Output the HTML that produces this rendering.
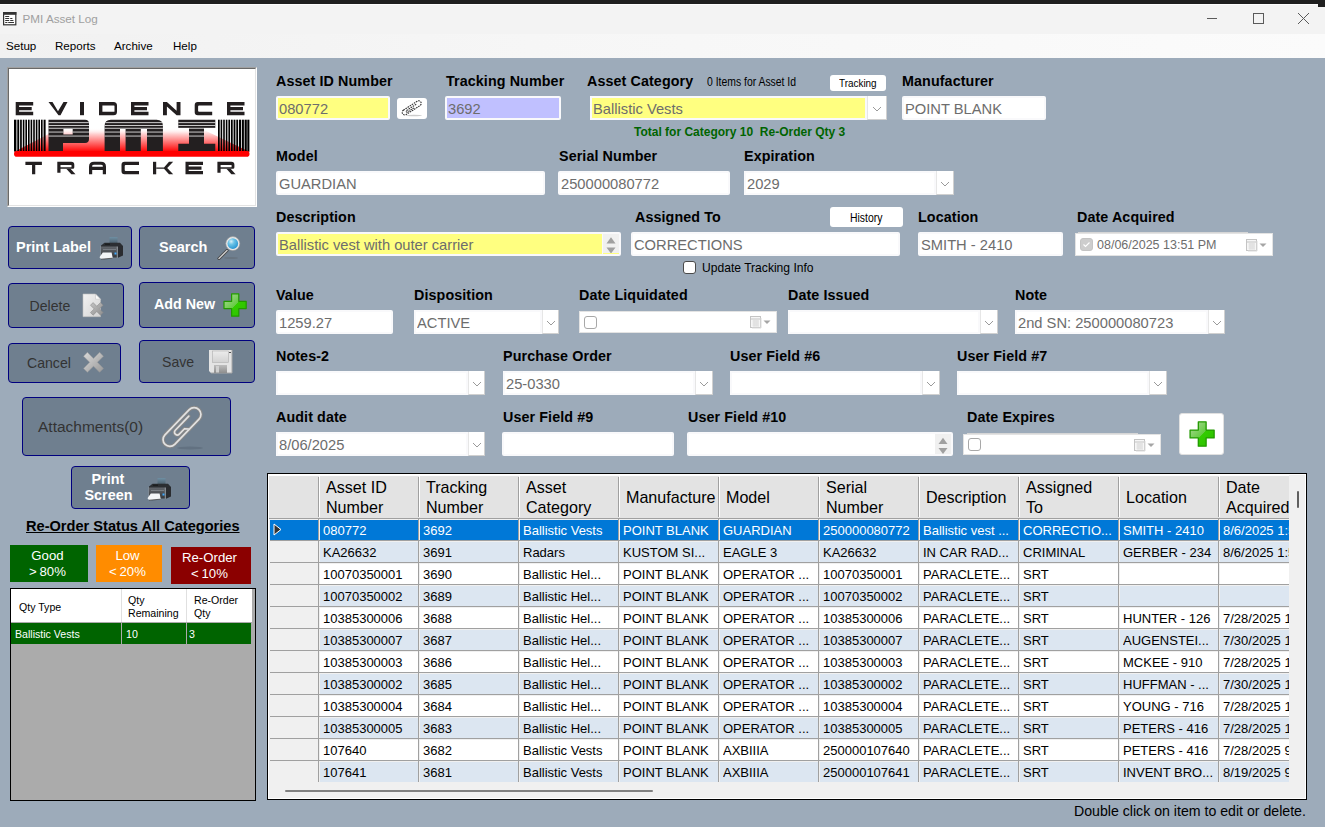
<!DOCTYPE html><html><head><meta charset="utf-8"><style>
html,body{margin:0;padding:0;}
body{width:1325px;height:827px;overflow:hidden;position:relative;background:#9DABBA;font-family:"Liberation Sans", sans-serif;}
.t{position:absolute;white-space:nowrap;}
.b{position:absolute;}
</style></head><body>
<div class="b" style="left:0px;top:0px;width:1325px;height:4px;background:#1F1F1F;"></div>
<div class="b" style="left:0px;top:4px;width:1325px;height:30px;background:#F3F3F3;"></div>
<div class="b" style="left:0px;top:4px;width:1320px;height:1px;background:#FDFDFD;"></div>
<div class="b" style="left:1318px;top:4px;width:7px;height:3px;background:#1F1F1F;border-bottom-left-radius:0;"></div>
<div class="b" style="left:0px;top:34px;width:1325px;height:24px;background:linear-gradient(to right,#F1F1F1,#F6F6F6 40%,#FBFBFB);"></div>
<svg class="b" style="left:3px;top:12px" width="14" height="14" viewBox="0 0 14 14"><rect x="0.6" y="0.6" width="12.2" height="12.2" fill="#fff" stroke="#333" stroke-width="1.2"/><rect x="0" y="0" width="13.4" height="2.8" fill="#333"/><path d="M2.6 4.5h3.2M2.6 6.5h3.2M7.6 6.5h1.4M2.6 8.5h3.2M7.6 8.5h2.4M2.6 10.5h1.4M5.6 10.5h5" stroke="#333" stroke-width="1" stroke-linecap="round"/></svg>
<div class="t" style="left:22.5px;top:13.10px;font-size:11.7px;line-height:11.7px;color:#A0A0A0;">PMI Asset Log</div>
<svg class="b" style="left:1205px;top:12px" width="110" height="14" viewBox="0 0 110 14"><path d="M2 6.5h10" stroke="#5a5a5a" stroke-width="1"/><rect x="48.5" y="1.5" width="10" height="10" fill="none" stroke="#5a5a5a" stroke-width="1"/><path d="M93 1l11 11M104 1l-11 11" stroke="#5a5a5a" stroke-width="1"/></svg>
<div class="t" style="left:6px;top:40.18px;font-size:11.6px;line-height:11.6px;color:#000;">Setup</div>
<div class="t" style="left:55px;top:40.18px;font-size:11.6px;line-height:11.6px;color:#000;">Reports</div>
<div class="t" style="left:114px;top:40.18px;font-size:11.6px;line-height:11.6px;color:#000;">Archive</div>
<div class="t" style="left:173px;top:40.18px;font-size:11.6px;line-height:11.6px;color:#000;">Help</div>
<div class="b" style="left:7px;top:67px;width:250px;height:140px;background:#fff;border-top:1px solid #A0A0A0;border-left:1px solid #A0A0A0;border-right:1px solid #fff;border-bottom:1px solid #fff;box-sizing:border-box;"></div>
<div class="b" style="left:8px;top:68px;width:248px;height:138px;background:#fff;border-top:1px solid #696969;border-left:1px solid #696969;border-right:1px solid #E3E3E3;border-bottom:1px solid #E3E3E3;box-sizing:border-box;"></div>
<svg class="b" style="left:9px;top:69px" width="247" height="137" viewBox="9 69 247 137"><path d="M15.7 102h17.5v3.4h-14.1v1.5000000000000018h12.6v3.4h-12.6v1.5000000000000018h14.1v3.4h-17.5z" fill="#231F20"/><path d="M48.5 102h4.0l5.5 9.300000000000002l5.5 -9.300000000000002h4.0l-7.0 13.200000000000003h-2z" fill="#231F20"/><rect x="80" y="102" width="4" height="13.200000000000003" fill="#231F20"/><path d="M99 102h14.5q3.5 0 3.5 3.5v6.200000000000003q0 3.5 -3.5 3.5h-14.5z M102.4 105.4v6.400000000000003h11.6q0.5 0 0.5 -0.5v-5.400000000000003q0 -0.5 -0.5 -0.5z" fill="#231F20" fill-rule="evenodd"/><path d="M131 102h17.5v3.4h-14.1v1.5000000000000018h12.6v3.4h-12.6v1.5000000000000018h14.1v3.4h-17.5z" fill="#231F20"/><path d="M163 102h3.9l9.7 8.800000000000002v-8.800000000000002h3.9v13.200000000000003h-3.9l-9.7 -8.800000000000002v8.800000000000002h-3.9z" fill="#231F20"/><path d="M212.2 102h-14.5q-3 0 -3 3v7.200000000000003q0 3 3 3h14.5v-3.4h-13.1q-1 0 -1 -1v-4.400000000000003q0 -1 1 -1h13.1z" fill="#231F20"/><path d="M227 102h17.5v3.4h-14.1v1.5000000000000018h12.6v3.4h-12.6v1.5000000000000018h14.1v3.4h-17.5z" fill="#231F20"/><path d="M25.4 161.8h16.5v3.2h-6.65v9.3h-3.2v-9.3h-6.65z" fill="#231F20"/><path d="M57.3 161.8h14q3 0 3 3v2.375000000000001q0 1.5 -1.5 1.5h-12.3v4.124999999999999h-3.2z M60.5 165.0v2.1750000000000007h10.8q0.2 0 0.2 -0.2v-1.6750000000000007q0 -0.3 -0.3 -0.3z" fill="#231F20" fill-rule="evenodd"/><path d="M66.3 168.675h4.2l5 5.625h-4.2z" fill="#231F20"/><path d="M89 174.3v-7.5q0-5 5-5h7q5 0 5 5v7.5h-3.2v-4.375h-10.6v4.375z M92.2 166.72500000000002h10.6v-0.9249999999999998q0 -1 -2 -1h-6.6q-2 0 -2 1z" fill="#231F20" fill-rule="evenodd"/><path d="M139.0 161.8h-14.5q-3 0 -3 3v6.5q0 3 3 3h14.5v-3.2h-13.3q-1 0 -1 -1v-4.1q0 -1 1 -1h13.3z" fill="#231F20"/><rect x="153" y="161.8" width="3.2" height="12.5" fill="#231F20"/><path d="M156.2 167.425h7.800000000000001l5 -5.625h4.2l-6 6.25l6 6.25h-4.2l-5 -5.625h-7.800000000000001z" fill="#231F20"/><path d="M185.5 161.8h17.5v3.2h-14.3v1.4499999999999993h12.8v3.2h-12.8v1.4499999999999993h14.3v3.2h-17.5z" fill="#231F20"/><path d="M217.4 161.8h14q3 0 3 3v2.375000000000001q0 1.5 -1.5 1.5h-12.3v4.124999999999999h-3.2z M220.6 165.0v2.1750000000000007h10.8q0.2 0 0.2 -0.2v-1.6750000000000007q0 -0.3 -0.3 -0.3z" fill="#231F20" fill-rule="evenodd"/><path d="M226.4 168.675h4.2l5 5.625h-4.2z" fill="#231F20"/><defs><linearGradient id="rg" x1="0" y1="0" x2="0" y2="1"><stop offset="0" stop-color="#fff" stop-opacity="0"/><stop offset="0.25" stop-color="#ffd0d0"/><stop offset="1" stop-color="#ff0000"/></linearGradient></defs><path d="M14 152L60 128H200L250 152Z" fill="url(#rg)"/><rect x="14" y="119.7" width="2.4" height="31.8" fill="#000"/><rect x="17.3" y="119.7" width="1.9" height="31.8" fill="#000"/><rect x="20.1" y="119.7" width="1.7" height="31.8" fill="#000"/><rect x="22.8" y="119.7" width="1.6" height="31.8" fill="#000"/><rect x="25.4" y="119.7" width="1.6" height="31.8" fill="#000"/><rect x="28" y="119.7" width="1.6" height="31.8" fill="#000"/><rect x="30.6" y="119.7" width="1.6" height="31.8" fill="#000"/><rect x="33.2" y="119.7" width="1.6" height="31.8" fill="#000"/><rect x="35.8" y="119.7" width="1.6" height="31.8" fill="#000"/><rect x="38.4" y="119.7" width="1.6" height="31.8" fill="#000"/><rect x="41" y="119.7" width="1.6" height="31.8" fill="#000"/><rect x="43.6" y="119.7" width="2" height="31.8" fill="#000"/><rect x="218" y="119.7" width="1.7" height="31.8" fill="#000"/><rect x="220.6" y="119.7" width="1.6" height="31.8" fill="#000"/><rect x="223.2" y="119.7" width="1.6" height="31.8" fill="#000"/><rect x="225.8" y="119.7" width="1.6" height="31.8" fill="#000"/><rect x="228.4" y="119.7" width="1.7" height="31.8" fill="#000"/><rect x="231" y="119.7" width="1.7" height="31.8" fill="#000"/><rect x="233.6" y="119.7" width="1.8" height="31.8" fill="#000"/><rect x="236.3" y="119.7" width="1.8" height="31.8" fill="#000"/><rect x="239" y="119.7" width="2" height="31.8" fill="#000"/><rect x="241.8" y="119.7" width="2.1" height="31.8" fill="#000"/><rect x="244.6" y="119.7" width="2.2" height="31.8" fill="#000"/><rect x="247.3" y="119.7" width="2.1" height="31.8" fill="#000"/><defs><clipPath id="pmic"><path d="M48.5 119.7H85q4 0 4 4V139q0 4 -4 4H63v8.5H48.5Z M63.4 128.4V134.6H72.7V128.4Z" fill-rule="evenodd"/><path d="M104.6 151.5V126q0-6.3 6.3-6.3H156.6q6.3 0 6.3 6.3V151.5H147V129H140.8V151.5H125.6V129H120V151.5Z"/><path d="M178.3 119.7H215.3V127.9H204V143.8H215.3V151.5H178.3V143.8H189V127.9H178.3Z"/></clipPath></defs><path d="M48.5 119.7H85q4 0 4 4V139q0 4 -4 4H63v8.5H48.5Z M63.4 128.4V134.6H72.7V128.4Z" fill="#231F20" fill-rule="evenodd"/><path d="M104.6 151.5V126q0-6.3 6.3-6.3H156.6q6.3 0 6.3 6.3V151.5H147V129H140.8V151.5H125.6V129H120V151.5Z" fill="#231F20"/><path d="M178.3 119.7H215.3V127.9H204V143.8H215.3V151.5H178.3V143.8H189V127.9H178.3Z" fill="#231F20"/><g clip-path="url(#pmic)"><rect x="47" y="122.2" width="170" height="0.9" fill="#fff" opacity="0.85"/><rect x="47" y="125.0" width="170" height="0.9" fill="#fff" opacity="0.85"/><rect x="47" y="127.8" width="170" height="0.9" fill="#fff" opacity="0.85"/><rect x="47" y="131.6" width="170" height="0.9" fill="#fff" opacity="0.85"/><rect x="47" y="135.6" width="170" height="0.9" fill="#fff" opacity="0.85"/></g><rect x="14" y="151" width="235.5" height="5.7" rx="2.8" fill="#FF0000"/></svg>
<div class="t" style="left:276px;top:73.90px;font-size:14.3px;line-height:14.3px;font-weight:bold;color:#000;letter-spacing:0.1px;">Asset ID Number</div>
<div class="b" style="left:276px;top:96px;width:114px;height:24px;background:#FFFF80;border:2px solid #F9F9FB;box-sizing:border-box;border-radius:2px;"></div>
<div class="t" style="left:279px;top:101.30px;font-size:15px;line-height:15px;color:#6D6D6D;transform:scaleX(0.98);transform-origin:0 0;">080772</div>
<div class="b" style="left:397px;top:98px;width:30px;height:21px;background:#fff;border-radius:3px;"></div>
<svg class="b" style="left:399px;top:99px" width="26" height="19" viewBox="0 0 26 19"><ellipse cx="15" cy="16.5" rx="8" ry="0.8" fill="#ccc"/><g transform="translate(12.5 9) rotate(-33)"><path d="M-8 -2.6H8.5A2.6 2.6 0 0 1 8.5 2.6H-8A2.6 2.6 0 0 1 -8 -2.6Z M6 -0.6H-5.5A0.9 0.9 0 0 0 -5.5 1.2H3" fill="none" stroke="#333" stroke-width="1.1" stroke-dasharray="1.6 0.9"/></g></svg>
<div class="t" style="left:446px;top:73.90px;font-size:14.3px;line-height:14.3px;font-weight:bold;color:#000;letter-spacing:0.1px;">Tracking Number</div>
<div class="b" style="left:445px;top:96px;width:116px;height:24px;background:#C0C0FF;border:2px solid #F9F9FB;box-sizing:border-box;border-radius:2px;"></div>
<div class="t" style="left:448px;top:101.30px;font-size:15px;line-height:15px;color:#6D6D6D;transform:scaleX(0.98);transform-origin:0 0;">3692</div>
<div class="t" style="left:587px;top:73.90px;font-size:14.3px;line-height:14.3px;font-weight:bold;color:#000;letter-spacing:0.1px;">Asset Category</div>
<div class="t" style="left:707px;top:75.84px;font-size:12px;line-height:12px;color:#000;transform:scaleX(0.867);transform-origin:0 0;">0 Items for Asset Id</div>
<div class="b" style="left:830px;top:75px;width:56px;height:16px;background:#fff;border-radius:3px;"></div>
<div class="t" style="left:838.5px;top:77.51px;font-size:11.8px;line-height:11.8px;color:#000;transform:scaleX(0.84);transform-origin:0 0;">Tracking</div>
<div class="b" style="left:590px;top:96px;width:277px;height:24px;background:#FFFF80;border:2px solid #F9F9FB;box-sizing:border-box;"></div>
<div class="b" style="left:867px;top:96px;width:20px;height:24px;background:#fff;border-left:1px solid #e6e6e6;border-right:1px solid #d0d0d0;border-bottom:1px solid #d0d0d0;box-sizing:border-box;"></div>
<svg class="b" style="left:872.0px;top:106.0px" width="10" height="6.0"><polyline points="1,1 5.0,5.0 9,1" fill="none" stroke="#9a9a9a" stroke-width="1"/></svg>
<div class="t" style="left:593px;top:101.30px;font-size:15px;line-height:15px;color:#6D6D6D;transform:scaleX(0.98);transform-origin:0 0;">Ballistic Vests</div>
<div class="t" style="left:634px;top:125.84px;font-size:12px;line-height:12px;font-weight:bold;color:#006400;white-space:pre;">Total for Category 10  Re-Order Qty 3</div>
<div class="t" style="left:902px;top:73.90px;font-size:14.3px;line-height:14.3px;font-weight:bold;color:#000;letter-spacing:0.1px;">Manufacturer</div>
<div class="b" style="left:902px;top:96px;width:144px;height:24px;background:#fff;border:2px solid #F9F9FB;box-sizing:border-box;border-radius:2px;"></div>
<div class="t" style="left:905px;top:101.30px;font-size:15px;line-height:15px;color:#6D6D6D;transform:scaleX(0.98);transform-origin:0 0;">POINT BLANK</div>
<div class="t" style="left:276px;top:148.90px;font-size:14.3px;line-height:14.3px;font-weight:bold;color:#000;letter-spacing:0.1px;">Model</div>
<div class="b" style="left:276px;top:171px;width:269px;height:24px;background:#fff;border:2px solid #F9F9FB;box-sizing:border-box;border-radius:2px;"></div>
<div class="t" style="left:279px;top:176.30px;font-size:15px;line-height:15px;color:#6D6D6D;transform:scaleX(0.98);transform-origin:0 0;">GUARDIAN</div>
<div class="t" style="left:559px;top:148.90px;font-size:14.3px;line-height:14.3px;font-weight:bold;color:#000;letter-spacing:0.1px;">Serial Number</div>
<div class="b" style="left:558px;top:171px;width:172px;height:24px;background:#fff;border:2px solid #F9F9FB;box-sizing:border-box;border-radius:2px;"></div>
<div class="t" style="left:561px;top:176.30px;font-size:15px;line-height:15px;color:#6D6D6D;transform:scaleX(0.98);transform-origin:0 0;">250000080772</div>
<div class="t" style="left:744px;top:148.90px;font-size:14.3px;line-height:14.3px;font-weight:bold;color:#000;letter-spacing:0.1px;">Expiration</div>
<div class="b" style="left:744px;top:171px;width:192px;height:24px;background:#fff;border:2px solid #F9F9FB;box-sizing:border-box;"></div>
<div class="b" style="left:936px;top:171px;width:18px;height:24px;background:#fff;border-left:1px solid #e6e6e6;border-right:1px solid #d0d0d0;border-bottom:1px solid #d0d0d0;box-sizing:border-box;"></div>
<svg class="b" style="left:940.0px;top:181.0px" width="10" height="6.0"><polyline points="1,1 5.0,5.0 9,1" fill="none" stroke="#9a9a9a" stroke-width="1"/></svg>
<div class="t" style="left:747px;top:176.30px;font-size:15px;line-height:15px;color:#6D6D6D;transform:scaleX(0.98);transform-origin:0 0;">2029</div>
<div class="t" style="left:276px;top:209.90px;font-size:14.3px;line-height:14.3px;font-weight:bold;color:#000;letter-spacing:0.1px;">Description</div>
<div class="b" style="left:276px;top:232px;width:345px;height:24px;background:#FFFF80;border:2px solid #F9F9FB;box-sizing:border-box;border-radius:2px;"></div>
<div class="t" style="left:279px;top:237.30px;font-size:15px;line-height:15px;color:#6D6D6D;transform:scaleX(0.98);transform-origin:0 0;">Ballistic vest with outer carrier</div>
<div class="b" style="left:602px;top:234px;width:1px;height:20px;background:#F9F9FB;"></div>
<div class="b" style="left:603px;top:234px;width:16px;height:19px;background:#F0F0F0;"></div>
<svg class="b" style="left:603px;top:234px" width="16" height="19"><path d="M3.5 9.5L8 3.2L12.5 9.5Z" fill="#A0A0A0"/><path d="M3.5 13.5L8 19.5L12.5 13.5Z" fill="#A0A0A0"/></svg>
<div class="t" style="left:635px;top:209.90px;font-size:14.3px;line-height:14.3px;font-weight:bold;color:#000;letter-spacing:0.1px;">Assigned To</div>
<div class="b" style="left:830px;top:207px;width:73px;height:20px;background:#fff;border-radius:3px;"></div>
<div class="t" style="left:850px;top:212.00px;font-size:12.4px;line-height:12.4px;color:#000;transform:scaleX(0.84);transform-origin:0 0;">History</div>
<div class="b" style="left:631px;top:232px;width:269px;height:24px;background:#fff;border:2px solid #F9F9FB;box-sizing:border-box;border-radius:2px;"></div>
<div class="t" style="left:634px;top:237.30px;font-size:15px;line-height:15px;color:#6D6D6D;transform:scaleX(0.98);transform-origin:0 0;">CORRECTIONS</div>
<div class="b" style="left:683px;top:261px;width:13px;height:13px;border:1px solid #4a4a4a;border-radius:3px;background:#fff;box-sizing:border-box;"></div>
<div class="t" style="left:702px;top:261.76px;font-size:12.1px;line-height:12.1px;color:#000;">Update Tracking Info</div>
<div class="t" style="left:918px;top:209.90px;font-size:14.3px;line-height:14.3px;font-weight:bold;color:#000;letter-spacing:0.1px;">Location</div>
<div class="b" style="left:918px;top:232px;width:145px;height:24px;background:#fff;border:2px solid #F9F9FB;box-sizing:border-box;border-radius:2px;"></div>
<div class="t" style="left:921px;top:237.30px;font-size:15px;line-height:15px;color:#6D6D6D;transform:scaleX(0.98);transform-origin:0 0;">SMITH - 2410</div>
<div class="t" style="left:1077px;top:209.90px;font-size:14.3px;line-height:14.3px;font-weight:bold;color:#000;letter-spacing:0.1px;">Date Acquired</div>
<div class="b" style="left:1078px;top:232px;width:170px;height:1px;background:#d6d6d6;"></div>
<div class="b" style="left:1075px;top:233px;width:198px;height:23px;background:#fff;border:1px solid #e3e3e3;box-sizing:border-box;"></div>
<div class="b" style="left:1080px;top:238.0px;width:13px;height:13px;border:1px solid #c4c4c4;background:#cdcdcd;border-radius:3px;box-sizing:border-box;"></div>
<svg class="b" style="left:1081px;top:239.0px" width="11" height="11"><polyline points="2.5,5.5 4.5,7.5 8.5,3.5" fill="none" stroke="#fff" stroke-width="1.1"/></svg>
<svg class="b" style="left:1246px;top:238.5px" width="22" height="13" viewBox="0 0 22 13"><rect x="0.5" y="0.5" width="10" height="11" fill="#f6f6f6" stroke="#c4c4c4"/><path d="M1 3h9" stroke="#c4c4c4"/><path d="M2.5 5h6M2.5 7h6M2.5 9h6M4 4v7M6 4v7M8 4v7" stroke="#d8d8d8" stroke-width="0.8"/><path d="M11 2v10h-9" fill="none" stroke="#dcdcdc"/><path d="M13.5 4.5h7l-3.5 3.5z" fill="#a5a5a5"/></svg>
<div class="t" style="left:1097px;top:238.52px;font-size:12.5px;line-height:12.5px;color:#6D6D6D;">08/06/2025 13:51 PM</div>
<div class="t" style="left:276px;top:287.90px;font-size:14.3px;line-height:14.3px;font-weight:bold;color:#000;letter-spacing:0.1px;">Value</div>
<div class="b" style="left:276px;top:310px;width:117px;height:24px;background:#fff;border:2px solid #F9F9FB;box-sizing:border-box;border-radius:2px;"></div>
<div class="t" style="left:279px;top:315.30px;font-size:15px;line-height:15px;color:#6D6D6D;transform:scaleX(0.98);transform-origin:0 0;">1259.27</div>
<div class="t" style="left:414px;top:287.90px;font-size:14.3px;line-height:14.3px;font-weight:bold;color:#000;letter-spacing:0.1px;">Disposition</div>
<div class="b" style="left:414px;top:310px;width:128px;height:24px;background:#fff;border:2px solid #F9F9FB;box-sizing:border-box;"></div>
<div class="b" style="left:542px;top:310px;width:17px;height:24px;background:#fff;border-left:1px solid #e6e6e6;border-right:1px solid #d0d0d0;border-bottom:1px solid #d0d0d0;box-sizing:border-box;"></div>
<svg class="b" style="left:545.5px;top:320.0px" width="10" height="6.0"><polyline points="1,1 5.0,5.0 9,1" fill="none" stroke="#9a9a9a" stroke-width="1"/></svg>
<div class="t" style="left:417px;top:315.30px;font-size:15px;line-height:15px;color:#6D6D6D;transform:scaleX(0.98);transform-origin:0 0;">ACTIVE</div>
<div class="t" style="left:579px;top:287.90px;font-size:14.3px;line-height:14.3px;font-weight:bold;color:#000;letter-spacing:0.1px;">Date Liquidated</div>
<div class="b" style="left:579px;top:311px;width:198px;height:22px;background:#fff;border:1px solid #e3e3e3;box-sizing:border-box;"></div>
<div class="b" style="left:584px;top:315.5px;width:13px;height:13px;border:1px solid #a8a8a8;background:#fff;border-radius:3px;box-sizing:border-box;"></div>
<svg class="b" style="left:750px;top:316.0px" width="22" height="13" viewBox="0 0 22 13"><rect x="0.5" y="0.5" width="10" height="11" fill="#f6f6f6" stroke="#c4c4c4"/><path d="M1 3h9" stroke="#c4c4c4"/><path d="M2.5 5h6M2.5 7h6M2.5 9h6M4 4v7M6 4v7M8 4v7" stroke="#d8d8d8" stroke-width="0.8"/><path d="M11 2v10h-9" fill="none" stroke="#dcdcdc"/><path d="M13.5 4.5h7l-3.5 3.5z" fill="#a5a5a5"/></svg>
<div class="t" style="left:788px;top:287.90px;font-size:14.3px;line-height:14.3px;font-weight:bold;color:#000;letter-spacing:0.1px;">Date Issued</div>
<div class="b" style="left:788px;top:310px;width:192px;height:24px;background:#fff;border:2px solid #F9F9FB;box-sizing:border-box;"></div>
<div class="b" style="left:980px;top:310px;width:18px;height:24px;background:#fff;border-left:1px solid #e6e6e6;border-right:1px solid #d0d0d0;border-bottom:1px solid #d0d0d0;box-sizing:border-box;"></div>
<svg class="b" style="left:984.0px;top:320.0px" width="10" height="6.0"><polyline points="1,1 5.0,5.0 9,1" fill="none" stroke="#9a9a9a" stroke-width="1"/></svg>
<div class="t" style="left:1015px;top:287.90px;font-size:14.3px;line-height:14.3px;font-weight:bold;color:#000;letter-spacing:0.1px;">Note</div>
<div class="b" style="left:1015px;top:310px;width:193px;height:24px;background:#fff;border:2px solid #F9F9FB;box-sizing:border-box;"></div>
<div class="b" style="left:1208px;top:310px;width:17px;height:24px;background:#fff;border-left:1px solid #e6e6e6;border-right:1px solid #d0d0d0;border-bottom:1px solid #d0d0d0;box-sizing:border-box;"></div>
<svg class="b" style="left:1211.5px;top:320.0px" width="10" height="6.0"><polyline points="1,1 5.0,5.0 9,1" fill="none" stroke="#9a9a9a" stroke-width="1"/></svg>
<div class="t" style="left:1018px;top:315.30px;font-size:15px;line-height:15px;color:#6D6D6D;transform:scaleX(0.98);transform-origin:0 0;">2nd SN: 250000080723</div>
<div class="t" style="left:276px;top:348.90px;font-size:14.3px;line-height:14.3px;font-weight:bold;color:#000;letter-spacing:0.1px;">Notes-2</div>
<div class="b" style="left:276px;top:371px;width:192px;height:24px;background:#fff;border:2px solid #F9F9FB;box-sizing:border-box;"></div>
<div class="b" style="left:468px;top:371px;width:17px;height:24px;background:#fff;border-left:1px solid #e6e6e6;border-right:1px solid #d0d0d0;border-bottom:1px solid #d0d0d0;box-sizing:border-box;"></div>
<svg class="b" style="left:471.5px;top:381.0px" width="10" height="6.0"><polyline points="1,1 5.0,5.0 9,1" fill="none" stroke="#9a9a9a" stroke-width="1"/></svg>
<div class="t" style="left:503px;top:348.90px;font-size:14.3px;line-height:14.3px;font-weight:bold;color:#000;letter-spacing:0.1px;">Purchase Order</div>
<div class="b" style="left:503px;top:371px;width:192px;height:24px;background:#fff;border:2px solid #F9F9FB;box-sizing:border-box;"></div>
<div class="b" style="left:695px;top:371px;width:18px;height:24px;background:#fff;border-left:1px solid #e6e6e6;border-right:1px solid #d0d0d0;border-bottom:1px solid #d0d0d0;box-sizing:border-box;"></div>
<svg class="b" style="left:699.0px;top:381.0px" width="10" height="6.0"><polyline points="1,1 5.0,5.0 9,1" fill="none" stroke="#9a9a9a" stroke-width="1"/></svg>
<div class="t" style="left:506px;top:376.30px;font-size:15px;line-height:15px;color:#6D6D6D;transform:scaleX(0.98);transform-origin:0 0;">25-0330</div>
<div class="t" style="left:730px;top:348.90px;font-size:14.3px;line-height:14.3px;font-weight:bold;color:#000;letter-spacing:0.1px;">User Field #6</div>
<div class="b" style="left:730px;top:371px;width:192px;height:24px;background:#fff;border:2px solid #F9F9FB;box-sizing:border-box;"></div>
<div class="b" style="left:922px;top:371px;width:18px;height:24px;background:#fff;border-left:1px solid #e6e6e6;border-right:1px solid #d0d0d0;border-bottom:1px solid #d0d0d0;box-sizing:border-box;"></div>
<svg class="b" style="left:926.0px;top:381.0px" width="10" height="6.0"><polyline points="1,1 5.0,5.0 9,1" fill="none" stroke="#9a9a9a" stroke-width="1"/></svg>
<div class="t" style="left:957px;top:348.90px;font-size:14.3px;line-height:14.3px;font-weight:bold;color:#000;letter-spacing:0.1px;">User Field #7</div>
<div class="b" style="left:957px;top:371px;width:192px;height:24px;background:#fff;border:2px solid #F9F9FB;box-sizing:border-box;"></div>
<div class="b" style="left:1149px;top:371px;width:18px;height:24px;background:#fff;border-left:1px solid #e6e6e6;border-right:1px solid #d0d0d0;border-bottom:1px solid #d0d0d0;box-sizing:border-box;"></div>
<svg class="b" style="left:1153.0px;top:381.0px" width="10" height="6.0"><polyline points="1,1 5.0,5.0 9,1" fill="none" stroke="#9a9a9a" stroke-width="1"/></svg>
<div class="t" style="left:276px;top:409.90px;font-size:14.3px;line-height:14.3px;font-weight:bold;color:#000;letter-spacing:0.1px;">Audit date</div>
<div class="b" style="left:276px;top:432px;width:192px;height:24px;background:#fff;border:2px solid #F9F9FB;box-sizing:border-box;"></div>
<div class="b" style="left:468px;top:432px;width:17px;height:24px;background:#fff;border-left:1px solid #e6e6e6;border-right:1px solid #d0d0d0;border-bottom:1px solid #d0d0d0;box-sizing:border-box;"></div>
<svg class="b" style="left:471.5px;top:442.0px" width="10" height="6.0"><polyline points="1,1 5.0,5.0 9,1" fill="none" stroke="#9a9a9a" stroke-width="1"/></svg>
<div class="t" style="left:279px;top:437.30px;font-size:15px;line-height:15px;color:#6D6D6D;transform:scaleX(0.98);transform-origin:0 0;">8/06/2025</div>
<div class="t" style="left:503px;top:409.90px;font-size:14.3px;line-height:14.3px;font-weight:bold;color:#000;letter-spacing:0.1px;">User Field #9</div>
<div class="b" style="left:502px;top:432px;width:172px;height:24px;background:#fff;border:2px solid #F9F9FB;box-sizing:border-box;border-radius:2px;"></div>
<div class="t" style="left:688px;top:409.90px;font-size:14.3px;line-height:14.3px;font-weight:bold;color:#000;letter-spacing:0.1px;">User Field #10</div>
<div class="b" style="left:687px;top:432px;width:266px;height:24px;background:#fff;border:2px solid #F9F9FB;box-sizing:border-box;border-radius:2px;"></div>
<div class="b" style="left:935px;top:434px;width:16px;height:20px;background:#F0F0F0;"></div>
<svg class="b" style="left:935px;top:434px" width="16" height="20"><path d="M3.5 10.0L8 3.7L12.5 10.0Z" fill="#A0A0A0"/><path d="M3.5 14.0L8 20.0L12.5 14.0Z" fill="#A0A0A0"/></svg>
<div class="t" style="left:967px;top:409.90px;font-size:14.3px;line-height:14.3px;font-weight:bold;color:#000;letter-spacing:0.1px;">Date Expires</div>
<div class="b" style="left:967px;top:433px;width:171px;height:1px;background:#d6d6d6;"></div>
<div class="b" style="left:963px;top:434px;width:198px;height:21px;background:#fff;border:1px solid #e3e3e3;box-sizing:border-box;"></div>
<div class="b" style="left:968px;top:438.0px;width:13px;height:13px;border:1px solid #a8a8a8;background:#fff;border-radius:3px;box-sizing:border-box;"></div>
<svg class="b" style="left:1134px;top:438.5px" width="22" height="13" viewBox="0 0 22 13"><rect x="0.5" y="0.5" width="10" height="11" fill="#f6f6f6" stroke="#c4c4c4"/><path d="M1 3h9" stroke="#c4c4c4"/><path d="M2.5 5h6M2.5 7h6M2.5 9h6M4 4v7M6 4v7M8 4v7" stroke="#d8d8d8" stroke-width="0.8"/><path d="M11 2v10h-9" fill="none" stroke="#dcdcdc"/><path d="M13.5 4.5h7l-3.5 3.5z" fill="#a5a5a5"/></svg>
<div class="b" style="left:1179px;top:413px;width:45px;height:42px;background:#fff;border-radius:3px;border:1px solid #e0e0e0;box-sizing:border-box;"></div>
<svg class="b" style="left:1189px;top:421px" width="26" height="26" viewBox="0 0 24 24"><defs><linearGradient id="pgb" x1="0" y1="0" x2="1" y2="1"><stop offset="0" stop-color="#b4d8a0"/><stop offset="0.5" stop-color="#66cc44"/><stop offset="0.52" stop-color="#33cc00"/><stop offset="1" stop-color="#2cbf00"/></linearGradient></defs><path d="M8.6 0.8h7.2v7.6h7.4v7.2h-7.4v7.6h-7.2v-7.6h-7.6v-7.2h7.6z" fill="url(#pgb)" stroke="#229a00" stroke-width="1.2" stroke-linejoin="round"/></svg>
<div class="b" style="left:8px;top:226px;width:124px;height:43px;background:#6F7F8F;border:1px solid #00007F;border-radius:4px;box-sizing:border-box;"></div>
<div class="t" style="left:16px;top:240.03px;font-size:14.5px;line-height:14.5px;font-weight:bold;color:#fff;">Print Label</div>
<svg class="b" style="left:99px;top:236px" width="26" height="24" viewBox="0 0 26 24"><defs><linearGradient id="pta" x1="0" y1="0" x2="0" y2="1"><stop offset="0" stop-color="#6f8fa3"/><stop offset="1" stop-color="#3f4d58"/></linearGradient><linearGradient id="pba" x1="0" y1="0" x2="0" y2="1"><stop offset="0" stop-color="#63676d"/><stop offset="1" stop-color="#35383c"/></linearGradient></defs><path d="M10.5 1h8v9h-8z" fill="url(#pta)"/><path d="M2 9.5l3.5-2.8h15.5l3 3.3v1h-22z" fill="#2b2e32"/><path d="M6 7.5h5v1.5h-5z" fill="#1c1e20"/><path d="M2 10.5h16.5v11h-16.5z" fill="url(#pba)"/><path d="M2 10l-0.5 0.5v11l0.5 0.3z" fill="#8d939a"/><path d="M18.5 10.5l5.5-0.5v9.5l-5.5 2.5z" fill="#2a2c30"/><path d="M18.3 10.5v11.5" stroke="#a7adb3" stroke-width="0.8"/><path d="M4 13.5h13" stroke="#7c8187" stroke-width="0.9"/><path d="M15.5 16.5h2v2h-2z" fill="#3fa9ff"/><path d="M0.5 21.2l3.3-4.8h8.8l1.2 5.8l-11.5 1z" fill="#f3f5f7"/><path d="M2 23.2l11.6-1" stroke="#222" stroke-width="0.9" opacity="0.7"/></svg>
<div class="b" style="left:139px;top:226px;width:116px;height:43px;background:#6F7F8F;border:1px solid #00007F;border-radius:4px;box-sizing:border-box;"></div>
<div class="t" style="left:159px;top:240.03px;font-size:14.5px;line-height:14.5px;font-weight:bold;color:#fff;">Search</div>
<svg class="b" style="left:217px;top:235px" width="25" height="26" viewBox="0 0 25 26"><defs><radialGradient id="mg" cx="0.35" cy="0.3" r="0.8"><stop offset="0" stop-color="#d8f0f8"/><stop offset="0.35" stop-color="#6cc3e6"/><stop offset="1" stop-color="#1e8fd0"/></radialGradient></defs><path d="M2 23.5l8-8" stroke="#3a3a3a" stroke-width="3" stroke-linecap="round"/><path d="M2 23.5l8-8" stroke="#c8c8c8" stroke-width="1.6" stroke-linecap="round"/><ellipse cx="14" cy="23" rx="7" ry="1" fill="#555" opacity="0.25"/><circle cx="15.8" cy="8.6" r="7" fill="#e8e8e8" stroke="#9a9a9a" stroke-width="0.6"/><circle cx="15.8" cy="8.6" r="5.3" fill="url(#mg)"/></svg>
<div class="b" style="left:8px;top:283px;width:116px;height:45px;background:#6F7F8F;border:1px solid #00007F;border-radius:4px;box-sizing:border-box;"></div>
<div class="t" style="left:29.5px;top:299.26px;font-size:14.1px;line-height:14.1px;color:#333;">Delete</div>
<svg class="b" style="left:82px;top:293px" width="23" height="25" viewBox="0 0 23 25"><defs><linearGradient id="dg" x1="0" y1="0" x2="1" y2="1"><stop offset="0" stop-color="#f2f2f2"/><stop offset="1" stop-color="#d4d4d4"/></linearGradient><linearGradient id="xg" x1="0" y1="0" x2="1" y2="1"><stop offset="0" stop-color="#c4c4c4"/><stop offset="1" stop-color="#8e8e8e"/></linearGradient></defs><path d="M1 1h12.5l5 5.2v17.5h-17.5z" fill="url(#dg)" stroke="#c0c0c0" stroke-width="0.6"/><path d="M13.5 1v5.2h5z" fill="#fafafa" stroke="#bdbdbd" stroke-width="0.5"/><path d="M8.5 12.2l2.6-2.6l3.7 3.7l3.7-3.7l2.6 2.6l-3.7 3.7l3.7 3.7l-2.6 2.6l-3.7-3.7l-3.7 3.7l-2.6-2.6l3.7-3.7z" fill="url(#xg)" stroke="#8a8a8a" stroke-width="0.6"/></svg>
<div class="b" style="left:139px;top:282px;width:116px;height:46px;background:#6F7F8F;border:1px solid #00007F;border-radius:4px;box-sizing:border-box;"></div>
<div class="t" style="left:154px;top:297.20px;font-size:14.3px;line-height:14.3px;font-weight:bold;color:#fff;">Add New</div>
<svg class="b" style="left:223px;top:293px" width="24" height="24" viewBox="0 0 24 24"><defs><linearGradient id="pga" x1="0" y1="0" x2="1" y2="1"><stop offset="0" stop-color="#b4d8a0"/><stop offset="0.5" stop-color="#66cc44"/><stop offset="0.52" stop-color="#33cc00"/><stop offset="1" stop-color="#2cbf00"/></linearGradient></defs><path d="M8.6 0.8h7.2v7.6h7.4v7.2h-7.4v7.6h-7.2v-7.6h-7.6v-7.2h7.6z" fill="url(#pga)" stroke="#229a00" stroke-width="1.2" stroke-linejoin="round"/></svg>
<div class="b" style="left:8px;top:343px;width:113px;height:40px;background:#6F7F8F;border:1px solid #00007F;border-radius:4px;box-sizing:border-box;"></div>
<div class="t" style="left:27px;top:356.36px;font-size:14.1px;line-height:14.1px;color:#333;">Cancel</div>
<svg class="b" style="left:83px;top:352px" width="21" height="21" viewBox="0 0 20 20"><defs><linearGradient id="cx" x1="0" y1="0" x2="1" y2="1"><stop offset="0" stop-color="#dadada"/><stop offset="1" stop-color="#999"/></linearGradient></defs><path d="M0.5 4l3.7-3.7l5.8 5.8l5.8-5.8l3.7 3.7l-5.8 5.8l5.8 5.8l-3.7 3.7l-5.8-5.8l-5.8 5.8l-3.7-3.7l5.8-5.8z" fill="url(#cx)" stroke="#9a9a9a" stroke-width="0.5"/></svg>
<div class="b" style="left:139px;top:340px;width:116px;height:43px;background:#6F7F8F;border:1px solid #00007F;border-radius:4px;box-sizing:border-box;"></div>
<div class="t" style="left:162px;top:355.06px;font-size:14.1px;line-height:14.1px;color:#333;">Save</div>
<svg class="b" style="left:209px;top:350px" width="24" height="24" viewBox="0 0 24 24"><defs><linearGradient id="fg" x1="0" y1="0" x2="0" y2="1"><stop offset="0" stop-color="#ececec"/><stop offset="1" stop-color="#d2d2d2"/></linearGradient><linearGradient id="fs" x1="0" y1="0" x2="0" y2="1"><stop offset="0" stop-color="#bdbdbd"/><stop offset="1" stop-color="#8e8e8e"/></linearGradient></defs><path d="M0 0h23v23h-21l-2-2z" fill="#e4e4e4"/><path d="M23 0v23h-21" fill="none" stroke="#a8a8a8" stroke-width="1"/><rect x="3.5" y="1" width="16" height="11.5" fill="url(#fg)" stroke="#b0b0b0" stroke-width="0.6"/><rect x="5" y="15" width="13" height="8" fill="url(#fs)"/><rect x="7" y="16" width="3" height="6.5" fill="#d0d0d0"/><rect x="20" y="2" width="2" height="1" fill="#555"/></svg>
<div class="b" style="left:22px;top:397px;width:209px;height:59px;background:#6F7F8F;border:1px solid #00007F;border-radius:4px;box-sizing:border-box;"></div>
<div class="t" style="left:38px;top:418.88px;font-size:15.5px;line-height:15.5px;color:#333;">Attachments(0)</div>
<svg class="b" style="left:156.9px;top:401.6px" width="50" height="50" viewBox="0 0 50 50"><ellipse cx="33" cy="46" rx="13" ry="1.4" fill="#4a5866" opacity="0.35"/><g transform="translate(25 25) rotate(-46)"><path d="M-17.5 -6.8 H17.5 A6.8 6.8 0 0 1 17.5 6.8 H-17.5 A6.8 6.8 0 0 1 -17.5 -6.8 Z M12.5 -2.6 H-7 A2.8 2.8 0 0 0 -7 3 H0.5 L3.5 6.8" fill="none" stroke="#888" stroke-width="3.6" stroke-linecap="round" stroke-linejoin="round"/><path d="M-17.5 -6.8 H17.5 A6.8 6.8 0 0 1 17.5 6.8 H-17.5 A6.8 6.8 0 0 1 -17.5 -6.8 Z M12.5 -2.6 H-7 A2.8 2.8 0 0 0 -7 3 H0.5 L3.5 6.8" fill="none" stroke="#e2e2e2" stroke-width="1.7" stroke-linecap="round" stroke-linejoin="round"/></g></svg>
<div class="b" style="left:71px;top:466px;width:119px;height:43px;background:#6F7F8F;border:1px solid #00007F;border-radius:4px;box-sizing:border-box;"></div>
<div class="t" style="left:91.5px;top:472.31px;font-size:14.4px;line-height:14.4px;font-weight:bold;color:#fff;">Print</div>
<div class="t" style="left:84.5px;top:488.31px;font-size:14.4px;line-height:14.4px;font-weight:bold;color:#fff;">Screen</div>
<svg class="b" style="left:147px;top:477px" width="26" height="24" viewBox="0 0 26 24"><defs><linearGradient id="ptb" x1="0" y1="0" x2="0" y2="1"><stop offset="0" stop-color="#6f8fa3"/><stop offset="1" stop-color="#3f4d58"/></linearGradient><linearGradient id="pbb" x1="0" y1="0" x2="0" y2="1"><stop offset="0" stop-color="#63676d"/><stop offset="1" stop-color="#35383c"/></linearGradient></defs><path d="M10.5 1h8v9h-8z" fill="url(#ptb)"/><path d="M2 9.5l3.5-2.8h15.5l3 3.3v1h-22z" fill="#2b2e32"/><path d="M6 7.5h5v1.5h-5z" fill="#1c1e20"/><path d="M2 10.5h16.5v11h-16.5z" fill="url(#pbb)"/><path d="M2 10l-0.5 0.5v11l0.5 0.3z" fill="#8d939a"/><path d="M18.5 10.5l5.5-0.5v9.5l-5.5 2.5z" fill="#2a2c30"/><path d="M18.3 10.5v11.5" stroke="#a7adb3" stroke-width="0.8"/><path d="M4 13.5h13" stroke="#7c8187" stroke-width="0.9"/><path d="M15.5 16.5h2v2h-2z" fill="#3fa9ff"/><path d="M0.5 21.2l3.3-4.8h8.8l1.2 5.8l-11.5 1z" fill="#f3f5f7"/><path d="M2 23.2l11.6-1" stroke="#222" stroke-width="0.9" opacity="0.7"/></svg>
<div class="t" style="left:26px;top:518.64px;font-size:14.6px;line-height:14.6px;font-weight:bold;color:#000;text-decoration:underline;">Re-Order Status All Categories</div>
<div class="b" style="left:10px;top:545px;width:78px;height:37px;background:#006400;"></div>
<div class="b" style="left:96px;top:545px;width:66px;height:37px;background:#FF8C00;"></div>
<div class="b" style="left:171px;top:547px;width:80px;height:37px;background:#8B0000;"></div>
<div class="t" style="left:8.5px;top:548px;width:78px;text-align:center;font-size:13.2px;line-height:15.5px;color:#fff;word-spacing:-1px;">Good<br>&gt; 80%</div>
<div class="t" style="left:94.5px;top:548px;width:66px;text-align:center;font-size:13.2px;line-height:15.5px;color:#fff;word-spacing:-1px;">Low<br>&lt; 20%</div>
<div class="t" style="left:169.5px;top:550px;width:80px;text-align:center;font-size:13.2px;line-height:15.5px;color:#fff;word-spacing:-1px;">Re-Order<br>&lt; 10%</div>
<div class="b" style="left:10px;top:588px;width:246px;height:213px;background:#ABABAB;border:1px solid #000;box-sizing:border-box;"></div>
<div class="b" style="left:11px;top:589px;width:241px;height:33px;background:#fff;"></div>
<div class="b" style="left:121px;top:589px;width:1px;height:33px;background:#e0e0e0;"></div>
<div class="b" style="left:186px;top:589px;width:1px;height:33px;background:#e0e0e0;"></div>
<div class="b" style="left:11px;top:623px;width:110px;height:21px;background:#006400;"></div>
<div class="b" style="left:122px;top:623px;width:64px;height:21px;background:#006400;"></div>
<div class="b" style="left:187px;top:623px;width:64px;height:21px;background:#006400;"></div>
<div class="t" style="left:19px;top:602.03px;font-size:10.6px;line-height:10.6px;color:#000;">Qty Type</div>
<div class="t" style="left:128px;top:595.03px;font-size:10.6px;line-height:10.6px;color:#000;">Qty</div>
<div class="t" style="left:128px;top:608.03px;font-size:10.6px;line-height:10.6px;color:#000;">Remaining</div>
<div class="t" style="left:194px;top:595.03px;font-size:10.6px;line-height:10.6px;color:#000;">Re-Order</div>
<div class="t" style="left:194px;top:608.03px;font-size:10.6px;line-height:10.6px;color:#000;">Qty</div>
<div class="t" style="left:15px;top:629.03px;font-size:10.6px;line-height:10.6px;color:#fff;">Ballistic Vests</div>
<div class="t" style="left:126px;top:629.03px;font-size:10.6px;line-height:10.6px;color:#fff;">10</div>
<div class="t" style="left:189px;top:629.03px;font-size:10.6px;line-height:10.6px;color:#fff;">3</div>
<div class="b" style="left:267px;top:473px;width:1040px;height:327px;background:#F0F0F0;border:1px solid #000;box-sizing:border-box;"></div>
<div class="b" style="left:268px;top:474px;width:1038px;height:325px;border:1px solid #fff;box-sizing:border-box;"></div>
<div class="b" style="left:269px;top:475px;width:1020px;height:43px;background:#E3E3E3;"></div>
<div class="b" style="left:269px;top:518px;width:1020px;height:1px;background:#A0A0A0;"></div>
<div class="b" style="left:269px;top:475px;width:1020px;height:1px;background:#FFFFFF;"></div>
<div class="b" style="left:318px;top:477px;width:1px;height:40px;background:#A0A0A0;"></div>
<div class="b" style="left:319px;top:476px;width:1px;height:41px;background:#FFFFFF;"></div>
<div class="t" style="left:326px;top:478.87px;font-size:16.1px;line-height:16.1px;color:#000;">Asset ID</div>
<div class="t" style="left:326px;top:498.87px;font-size:16.1px;line-height:16.1px;color:#000;">Number</div>
<div class="b" style="left:418px;top:477px;width:1px;height:40px;background:#A0A0A0;"></div>
<div class="b" style="left:419px;top:476px;width:1px;height:41px;background:#FFFFFF;"></div>
<div class="t" style="left:426px;top:478.87px;font-size:16.1px;line-height:16.1px;color:#000;">Tracking</div>
<div class="t" style="left:426px;top:498.87px;font-size:16.1px;line-height:16.1px;color:#000;">Number</div>
<div class="b" style="left:518px;top:477px;width:1px;height:40px;background:#A0A0A0;"></div>
<div class="b" style="left:519px;top:476px;width:1px;height:41px;background:#FFFFFF;"></div>
<div class="t" style="left:526px;top:478.87px;font-size:16.1px;line-height:16.1px;color:#000;">Asset</div>
<div class="t" style="left:526px;top:498.87px;font-size:16.1px;line-height:16.1px;color:#000;">Category</div>
<div class="b" style="left:618px;top:477px;width:1px;height:40px;background:#A0A0A0;"></div>
<div class="b" style="left:619px;top:476px;width:1px;height:41px;background:#FFFFFF;"></div>
<div class="t" style="left:626px;top:488.87px;font-size:16.1px;line-height:16.1px;color:#000;">Manufacture</div>
<div class="b" style="left:718px;top:477px;width:1px;height:40px;background:#A0A0A0;"></div>
<div class="b" style="left:719px;top:476px;width:1px;height:41px;background:#FFFFFF;"></div>
<div class="t" style="left:726px;top:488.87px;font-size:16.1px;line-height:16.1px;color:#000;">Model</div>
<div class="b" style="left:818px;top:477px;width:1px;height:40px;background:#A0A0A0;"></div>
<div class="b" style="left:819px;top:476px;width:1px;height:41px;background:#FFFFFF;"></div>
<div class="t" style="left:826px;top:478.87px;font-size:16.1px;line-height:16.1px;color:#000;">Serial</div>
<div class="t" style="left:826px;top:498.87px;font-size:16.1px;line-height:16.1px;color:#000;">Number</div>
<div class="b" style="left:918px;top:477px;width:1px;height:40px;background:#A0A0A0;"></div>
<div class="b" style="left:919px;top:476px;width:1px;height:41px;background:#FFFFFF;"></div>
<div class="t" style="left:926px;top:488.87px;font-size:16.1px;line-height:16.1px;color:#000;">Description</div>
<div class="b" style="left:1018px;top:477px;width:1px;height:40px;background:#A0A0A0;"></div>
<div class="b" style="left:1019px;top:476px;width:1px;height:41px;background:#FFFFFF;"></div>
<div class="t" style="left:1026px;top:478.87px;font-size:16.1px;line-height:16.1px;color:#000;">Assigned</div>
<div class="t" style="left:1026px;top:498.87px;font-size:16.1px;line-height:16.1px;color:#000;">To</div>
<div class="b" style="left:1118px;top:477px;width:1px;height:40px;background:#A0A0A0;"></div>
<div class="b" style="left:1119px;top:476px;width:1px;height:41px;background:#FFFFFF;"></div>
<div class="t" style="left:1126px;top:488.87px;font-size:16.1px;line-height:16.1px;color:#000;">Location</div>
<div class="b" style="left:1218px;top:477px;width:1px;height:40px;background:#A0A0A0;"></div>
<div class="b" style="left:1219px;top:476px;width:1px;height:41px;background:#FFFFFF;"></div>
<div class="t" style="left:1226px;top:478.87px;font-size:16.1px;line-height:16.1px;color:#000;">Date</div>
<div class="t" style="left:1226px;top:498.87px;font-size:16.1px;line-height:16.1px;color:#000;">Acquired</div>
<div class="b" style="left:269px;top:519px;width:1020px;height:263px;overflow:hidden;">
<div class="b" style="left:0px;top:0px;width:49px;height:22px;background:#F0F0F0;"></div>
<div class="b" style="left:1px;top:1px;width:48px;height:20px;background:#0078D7;"></div>
<svg class="b" style="left:4px;top:4px" width="10" height="13"><path d="M1 1L8 6.5L1 12Z" fill="#333" stroke="#fff" stroke-width="1"/></svg>
<div class="b" style="left:1px;top:21px;width:48px;height:1px;background:#A0A0A0;"></div>
<div class="b" style="left:49px;top:0px;width:1px;height:22px;background:#A0A0A0;"></div>
<div class="b" style="left:51px;top:1px;width:98px;height:20px;background:#0078D7;"></div>
<div class="b" style="left:149px;top:0px;width:1px;height:22px;background:#A0A0A0;"></div>
<div class="b" style="left:50px;top:21px;width:100px;height:1px;background:#A0A0A0;"></div>
<div class="t" style="left:54px;top:4.90px;width:95px;overflow:hidden;font-size:13px;line-height:13px;color:#fff;">080772</div>
<div class="b" style="left:151px;top:1px;width:98px;height:20px;background:#0078D7;"></div>
<div class="b" style="left:249px;top:0px;width:1px;height:22px;background:#A0A0A0;"></div>
<div class="b" style="left:150px;top:21px;width:100px;height:1px;background:#A0A0A0;"></div>
<div class="t" style="left:154px;top:4.90px;width:95px;overflow:hidden;font-size:13px;line-height:13px;color:#fff;">3692</div>
<div class="b" style="left:251px;top:1px;width:98px;height:20px;background:#0078D7;"></div>
<div class="b" style="left:349px;top:0px;width:1px;height:22px;background:#A0A0A0;"></div>
<div class="b" style="left:250px;top:21px;width:100px;height:1px;background:#A0A0A0;"></div>
<div class="t" style="left:254px;top:4.90px;width:95px;overflow:hidden;font-size:13px;line-height:13px;color:#fff;">Ballistic Vests</div>
<div class="b" style="left:351px;top:1px;width:98px;height:20px;background:#0078D7;"></div>
<div class="b" style="left:449px;top:0px;width:1px;height:22px;background:#A0A0A0;"></div>
<div class="b" style="left:350px;top:21px;width:100px;height:1px;background:#A0A0A0;"></div>
<div class="t" style="left:354px;top:4.90px;width:95px;overflow:hidden;font-size:13px;line-height:13px;color:#fff;">POINT BLANK</div>
<div class="b" style="left:451px;top:1px;width:98px;height:20px;background:#0078D7;"></div>
<div class="b" style="left:549px;top:0px;width:1px;height:22px;background:#A0A0A0;"></div>
<div class="b" style="left:450px;top:21px;width:100px;height:1px;background:#A0A0A0;"></div>
<div class="t" style="left:454px;top:4.90px;width:95px;overflow:hidden;font-size:13px;line-height:13px;color:#fff;">GUARDIAN</div>
<div class="b" style="left:551px;top:1px;width:98px;height:20px;background:#0078D7;"></div>
<div class="b" style="left:649px;top:0px;width:1px;height:22px;background:#A0A0A0;"></div>
<div class="b" style="left:550px;top:21px;width:100px;height:1px;background:#A0A0A0;"></div>
<div class="t" style="left:554px;top:4.90px;width:95px;overflow:hidden;font-size:13px;line-height:13px;color:#fff;">250000080772</div>
<div class="b" style="left:651px;top:1px;width:98px;height:20px;background:#0078D7;"></div>
<div class="b" style="left:749px;top:0px;width:1px;height:22px;background:#A0A0A0;"></div>
<div class="b" style="left:650px;top:21px;width:100px;height:1px;background:#A0A0A0;"></div>
<div class="t" style="left:654px;top:4.90px;width:95px;overflow:hidden;font-size:13px;line-height:13px;color:#fff;">Ballistic vest ...</div>
<div class="b" style="left:751px;top:1px;width:98px;height:20px;background:#0078D7;"></div>
<div class="b" style="left:849px;top:0px;width:1px;height:22px;background:#A0A0A0;"></div>
<div class="b" style="left:750px;top:21px;width:100px;height:1px;background:#A0A0A0;"></div>
<div class="t" style="left:754px;top:4.90px;width:95px;overflow:hidden;font-size:13px;line-height:13px;color:#fff;">CORRECTIO...</div>
<div class="b" style="left:851px;top:1px;width:98px;height:20px;background:#0078D7;"></div>
<div class="b" style="left:949px;top:0px;width:1px;height:22px;background:#A0A0A0;"></div>
<div class="b" style="left:850px;top:21px;width:100px;height:1px;background:#A0A0A0;"></div>
<div class="t" style="left:854px;top:4.90px;width:95px;overflow:hidden;font-size:13px;line-height:13px;color:#fff;">SMITH - 2410</div>
<div class="b" style="left:951px;top:1px;width:98px;height:20px;background:#0078D7;"></div>
<div class="b" style="left:1049px;top:0px;width:1px;height:22px;background:#A0A0A0;"></div>
<div class="b" style="left:950px;top:21px;width:100px;height:1px;background:#A0A0A0;"></div>
<div class="t" style="left:954px;top:4.90px;width:95px;overflow:hidden;font-size:13px;line-height:13px;color:#fff;">8/6/2025 1:51 PM</div>
<div class="b" style="left:0px;top:22px;width:49px;height:22px;background:#F0F0F0;"></div>
<div class="b" style="left:1px;top:43px;width:48px;height:1px;background:#A0A0A0;"></div>
<div class="b" style="left:49px;top:22px;width:1px;height:22px;background:#A0A0A0;"></div>
<div class="b" style="left:51px;top:23px;width:98px;height:20px;background:#DCE6F1;"></div>
<div class="b" style="left:149px;top:22px;width:1px;height:22px;background:#A0A0A0;"></div>
<div class="b" style="left:50px;top:43px;width:100px;height:1px;background:#A0A0A0;"></div>
<div class="t" style="left:54px;top:26.90px;width:95px;overflow:hidden;font-size:13px;line-height:13px;color:#000;">KA26632</div>
<div class="b" style="left:151px;top:23px;width:98px;height:20px;background:#DCE6F1;"></div>
<div class="b" style="left:249px;top:22px;width:1px;height:22px;background:#A0A0A0;"></div>
<div class="b" style="left:150px;top:43px;width:100px;height:1px;background:#A0A0A0;"></div>
<div class="t" style="left:154px;top:26.90px;width:95px;overflow:hidden;font-size:13px;line-height:13px;color:#000;">3691</div>
<div class="b" style="left:251px;top:23px;width:98px;height:20px;background:#DCE6F1;"></div>
<div class="b" style="left:349px;top:22px;width:1px;height:22px;background:#A0A0A0;"></div>
<div class="b" style="left:250px;top:43px;width:100px;height:1px;background:#A0A0A0;"></div>
<div class="t" style="left:254px;top:26.90px;width:95px;overflow:hidden;font-size:13px;line-height:13px;color:#000;">Radars</div>
<div class="b" style="left:351px;top:23px;width:98px;height:20px;background:#DCE6F1;"></div>
<div class="b" style="left:449px;top:22px;width:1px;height:22px;background:#A0A0A0;"></div>
<div class="b" style="left:350px;top:43px;width:100px;height:1px;background:#A0A0A0;"></div>
<div class="t" style="left:354px;top:26.90px;width:95px;overflow:hidden;font-size:13px;line-height:13px;color:#000;">KUSTOM SI...</div>
<div class="b" style="left:451px;top:23px;width:98px;height:20px;background:#DCE6F1;"></div>
<div class="b" style="left:549px;top:22px;width:1px;height:22px;background:#A0A0A0;"></div>
<div class="b" style="left:450px;top:43px;width:100px;height:1px;background:#A0A0A0;"></div>
<div class="t" style="left:454px;top:26.90px;width:95px;overflow:hidden;font-size:13px;line-height:13px;color:#000;">EAGLE 3</div>
<div class="b" style="left:551px;top:23px;width:98px;height:20px;background:#DCE6F1;"></div>
<div class="b" style="left:649px;top:22px;width:1px;height:22px;background:#A0A0A0;"></div>
<div class="b" style="left:550px;top:43px;width:100px;height:1px;background:#A0A0A0;"></div>
<div class="t" style="left:554px;top:26.90px;width:95px;overflow:hidden;font-size:13px;line-height:13px;color:#000;">KA26632</div>
<div class="b" style="left:651px;top:23px;width:98px;height:20px;background:#DCE6F1;"></div>
<div class="b" style="left:749px;top:22px;width:1px;height:22px;background:#A0A0A0;"></div>
<div class="b" style="left:650px;top:43px;width:100px;height:1px;background:#A0A0A0;"></div>
<div class="t" style="left:654px;top:26.90px;width:95px;overflow:hidden;font-size:13px;line-height:13px;color:#000;">IN CAR RAD...</div>
<div class="b" style="left:751px;top:23px;width:98px;height:20px;background:#DCE6F1;"></div>
<div class="b" style="left:849px;top:22px;width:1px;height:22px;background:#A0A0A0;"></div>
<div class="b" style="left:750px;top:43px;width:100px;height:1px;background:#A0A0A0;"></div>
<div class="t" style="left:754px;top:26.90px;width:95px;overflow:hidden;font-size:13px;line-height:13px;color:#000;">CRIMINAL</div>
<div class="b" style="left:851px;top:23px;width:98px;height:20px;background:#DCE6F1;"></div>
<div class="b" style="left:949px;top:22px;width:1px;height:22px;background:#A0A0A0;"></div>
<div class="b" style="left:850px;top:43px;width:100px;height:1px;background:#A0A0A0;"></div>
<div class="t" style="left:854px;top:26.90px;width:95px;overflow:hidden;font-size:13px;line-height:13px;color:#000;">GERBER - 234</div>
<div class="b" style="left:951px;top:23px;width:98px;height:20px;background:#DCE6F1;"></div>
<div class="b" style="left:1049px;top:22px;width:1px;height:22px;background:#A0A0A0;"></div>
<div class="b" style="left:950px;top:43px;width:100px;height:1px;background:#A0A0A0;"></div>
<div class="t" style="left:954px;top:26.90px;width:95px;overflow:hidden;font-size:13px;line-height:13px;color:#000;">8/6/2025 1:51 PM</div>
<div class="b" style="left:0px;top:44px;width:49px;height:22px;background:#F0F0F0;"></div>
<div class="b" style="left:1px;top:65px;width:48px;height:1px;background:#A0A0A0;"></div>
<div class="b" style="left:49px;top:44px;width:1px;height:22px;background:#A0A0A0;"></div>
<div class="b" style="left:51px;top:45px;width:98px;height:20px;background:#FFFFFF;"></div>
<div class="b" style="left:149px;top:44px;width:1px;height:22px;background:#A0A0A0;"></div>
<div class="b" style="left:50px;top:65px;width:100px;height:1px;background:#A0A0A0;"></div>
<div class="t" style="left:54px;top:48.90px;width:95px;overflow:hidden;font-size:13px;line-height:13px;color:#000;">10070350001</div>
<div class="b" style="left:151px;top:45px;width:98px;height:20px;background:#FFFFFF;"></div>
<div class="b" style="left:249px;top:44px;width:1px;height:22px;background:#A0A0A0;"></div>
<div class="b" style="left:150px;top:65px;width:100px;height:1px;background:#A0A0A0;"></div>
<div class="t" style="left:154px;top:48.90px;width:95px;overflow:hidden;font-size:13px;line-height:13px;color:#000;">3690</div>
<div class="b" style="left:251px;top:45px;width:98px;height:20px;background:#FFFFFF;"></div>
<div class="b" style="left:349px;top:44px;width:1px;height:22px;background:#A0A0A0;"></div>
<div class="b" style="left:250px;top:65px;width:100px;height:1px;background:#A0A0A0;"></div>
<div class="t" style="left:254px;top:48.90px;width:95px;overflow:hidden;font-size:13px;line-height:13px;color:#000;">Ballistic Hel...</div>
<div class="b" style="left:351px;top:45px;width:98px;height:20px;background:#FFFFFF;"></div>
<div class="b" style="left:449px;top:44px;width:1px;height:22px;background:#A0A0A0;"></div>
<div class="b" style="left:350px;top:65px;width:100px;height:1px;background:#A0A0A0;"></div>
<div class="t" style="left:354px;top:48.90px;width:95px;overflow:hidden;font-size:13px;line-height:13px;color:#000;">POINT BLANK</div>
<div class="b" style="left:451px;top:45px;width:98px;height:20px;background:#FFFFFF;"></div>
<div class="b" style="left:549px;top:44px;width:1px;height:22px;background:#A0A0A0;"></div>
<div class="b" style="left:450px;top:65px;width:100px;height:1px;background:#A0A0A0;"></div>
<div class="t" style="left:454px;top:48.90px;width:95px;overflow:hidden;font-size:13px;line-height:13px;color:#000;">OPERATOR ...</div>
<div class="b" style="left:551px;top:45px;width:98px;height:20px;background:#FFFFFF;"></div>
<div class="b" style="left:649px;top:44px;width:1px;height:22px;background:#A0A0A0;"></div>
<div class="b" style="left:550px;top:65px;width:100px;height:1px;background:#A0A0A0;"></div>
<div class="t" style="left:554px;top:48.90px;width:95px;overflow:hidden;font-size:13px;line-height:13px;color:#000;">10070350001</div>
<div class="b" style="left:651px;top:45px;width:98px;height:20px;background:#FFFFFF;"></div>
<div class="b" style="left:749px;top:44px;width:1px;height:22px;background:#A0A0A0;"></div>
<div class="b" style="left:650px;top:65px;width:100px;height:1px;background:#A0A0A0;"></div>
<div class="t" style="left:654px;top:48.90px;width:95px;overflow:hidden;font-size:13px;line-height:13px;color:#000;">PARACLETE...</div>
<div class="b" style="left:751px;top:45px;width:98px;height:20px;background:#FFFFFF;"></div>
<div class="b" style="left:849px;top:44px;width:1px;height:22px;background:#A0A0A0;"></div>
<div class="b" style="left:750px;top:65px;width:100px;height:1px;background:#A0A0A0;"></div>
<div class="t" style="left:754px;top:48.90px;width:95px;overflow:hidden;font-size:13px;line-height:13px;color:#000;">SRT</div>
<div class="b" style="left:851px;top:45px;width:98px;height:20px;background:#FFFFFF;"></div>
<div class="b" style="left:949px;top:44px;width:1px;height:22px;background:#A0A0A0;"></div>
<div class="b" style="left:850px;top:65px;width:100px;height:1px;background:#A0A0A0;"></div>
<div class="b" style="left:951px;top:45px;width:98px;height:20px;background:#FFFFFF;"></div>
<div class="b" style="left:1049px;top:44px;width:1px;height:22px;background:#A0A0A0;"></div>
<div class="b" style="left:950px;top:65px;width:100px;height:1px;background:#A0A0A0;"></div>
<div class="b" style="left:0px;top:66px;width:49px;height:22px;background:#F0F0F0;"></div>
<div class="b" style="left:1px;top:87px;width:48px;height:1px;background:#A0A0A0;"></div>
<div class="b" style="left:49px;top:66px;width:1px;height:22px;background:#A0A0A0;"></div>
<div class="b" style="left:51px;top:67px;width:98px;height:20px;background:#DCE6F1;"></div>
<div class="b" style="left:149px;top:66px;width:1px;height:22px;background:#A0A0A0;"></div>
<div class="b" style="left:50px;top:87px;width:100px;height:1px;background:#A0A0A0;"></div>
<div class="t" style="left:54px;top:70.90px;width:95px;overflow:hidden;font-size:13px;line-height:13px;color:#000;">10070350002</div>
<div class="b" style="left:151px;top:67px;width:98px;height:20px;background:#DCE6F1;"></div>
<div class="b" style="left:249px;top:66px;width:1px;height:22px;background:#A0A0A0;"></div>
<div class="b" style="left:150px;top:87px;width:100px;height:1px;background:#A0A0A0;"></div>
<div class="t" style="left:154px;top:70.90px;width:95px;overflow:hidden;font-size:13px;line-height:13px;color:#000;">3689</div>
<div class="b" style="left:251px;top:67px;width:98px;height:20px;background:#DCE6F1;"></div>
<div class="b" style="left:349px;top:66px;width:1px;height:22px;background:#A0A0A0;"></div>
<div class="b" style="left:250px;top:87px;width:100px;height:1px;background:#A0A0A0;"></div>
<div class="t" style="left:254px;top:70.90px;width:95px;overflow:hidden;font-size:13px;line-height:13px;color:#000;">Ballistic Hel...</div>
<div class="b" style="left:351px;top:67px;width:98px;height:20px;background:#DCE6F1;"></div>
<div class="b" style="left:449px;top:66px;width:1px;height:22px;background:#A0A0A0;"></div>
<div class="b" style="left:350px;top:87px;width:100px;height:1px;background:#A0A0A0;"></div>
<div class="t" style="left:354px;top:70.90px;width:95px;overflow:hidden;font-size:13px;line-height:13px;color:#000;">POINT BLANK</div>
<div class="b" style="left:451px;top:67px;width:98px;height:20px;background:#DCE6F1;"></div>
<div class="b" style="left:549px;top:66px;width:1px;height:22px;background:#A0A0A0;"></div>
<div class="b" style="left:450px;top:87px;width:100px;height:1px;background:#A0A0A0;"></div>
<div class="t" style="left:454px;top:70.90px;width:95px;overflow:hidden;font-size:13px;line-height:13px;color:#000;">OPERATOR ...</div>
<div class="b" style="left:551px;top:67px;width:98px;height:20px;background:#DCE6F1;"></div>
<div class="b" style="left:649px;top:66px;width:1px;height:22px;background:#A0A0A0;"></div>
<div class="b" style="left:550px;top:87px;width:100px;height:1px;background:#A0A0A0;"></div>
<div class="t" style="left:554px;top:70.90px;width:95px;overflow:hidden;font-size:13px;line-height:13px;color:#000;">10070350002</div>
<div class="b" style="left:651px;top:67px;width:98px;height:20px;background:#DCE6F1;"></div>
<div class="b" style="left:749px;top:66px;width:1px;height:22px;background:#A0A0A0;"></div>
<div class="b" style="left:650px;top:87px;width:100px;height:1px;background:#A0A0A0;"></div>
<div class="t" style="left:654px;top:70.90px;width:95px;overflow:hidden;font-size:13px;line-height:13px;color:#000;">PARACLETE...</div>
<div class="b" style="left:751px;top:67px;width:98px;height:20px;background:#DCE6F1;"></div>
<div class="b" style="left:849px;top:66px;width:1px;height:22px;background:#A0A0A0;"></div>
<div class="b" style="left:750px;top:87px;width:100px;height:1px;background:#A0A0A0;"></div>
<div class="t" style="left:754px;top:70.90px;width:95px;overflow:hidden;font-size:13px;line-height:13px;color:#000;">SRT</div>
<div class="b" style="left:851px;top:67px;width:98px;height:20px;background:#DCE6F1;"></div>
<div class="b" style="left:949px;top:66px;width:1px;height:22px;background:#A0A0A0;"></div>
<div class="b" style="left:850px;top:87px;width:100px;height:1px;background:#A0A0A0;"></div>
<div class="b" style="left:951px;top:67px;width:98px;height:20px;background:#DCE6F1;"></div>
<div class="b" style="left:1049px;top:66px;width:1px;height:22px;background:#A0A0A0;"></div>
<div class="b" style="left:950px;top:87px;width:100px;height:1px;background:#A0A0A0;"></div>
<div class="b" style="left:0px;top:88px;width:49px;height:22px;background:#F0F0F0;"></div>
<div class="b" style="left:1px;top:109px;width:48px;height:1px;background:#A0A0A0;"></div>
<div class="b" style="left:49px;top:88px;width:1px;height:22px;background:#A0A0A0;"></div>
<div class="b" style="left:51px;top:89px;width:98px;height:20px;background:#FFFFFF;"></div>
<div class="b" style="left:149px;top:88px;width:1px;height:22px;background:#A0A0A0;"></div>
<div class="b" style="left:50px;top:109px;width:100px;height:1px;background:#A0A0A0;"></div>
<div class="t" style="left:54px;top:92.90px;width:95px;overflow:hidden;font-size:13px;line-height:13px;color:#000;">10385300006</div>
<div class="b" style="left:151px;top:89px;width:98px;height:20px;background:#FFFFFF;"></div>
<div class="b" style="left:249px;top:88px;width:1px;height:22px;background:#A0A0A0;"></div>
<div class="b" style="left:150px;top:109px;width:100px;height:1px;background:#A0A0A0;"></div>
<div class="t" style="left:154px;top:92.90px;width:95px;overflow:hidden;font-size:13px;line-height:13px;color:#000;">3688</div>
<div class="b" style="left:251px;top:89px;width:98px;height:20px;background:#FFFFFF;"></div>
<div class="b" style="left:349px;top:88px;width:1px;height:22px;background:#A0A0A0;"></div>
<div class="b" style="left:250px;top:109px;width:100px;height:1px;background:#A0A0A0;"></div>
<div class="t" style="left:254px;top:92.90px;width:95px;overflow:hidden;font-size:13px;line-height:13px;color:#000;">Ballistic Hel...</div>
<div class="b" style="left:351px;top:89px;width:98px;height:20px;background:#FFFFFF;"></div>
<div class="b" style="left:449px;top:88px;width:1px;height:22px;background:#A0A0A0;"></div>
<div class="b" style="left:350px;top:109px;width:100px;height:1px;background:#A0A0A0;"></div>
<div class="t" style="left:354px;top:92.90px;width:95px;overflow:hidden;font-size:13px;line-height:13px;color:#000;">POINT BLANK</div>
<div class="b" style="left:451px;top:89px;width:98px;height:20px;background:#FFFFFF;"></div>
<div class="b" style="left:549px;top:88px;width:1px;height:22px;background:#A0A0A0;"></div>
<div class="b" style="left:450px;top:109px;width:100px;height:1px;background:#A0A0A0;"></div>
<div class="t" style="left:454px;top:92.90px;width:95px;overflow:hidden;font-size:13px;line-height:13px;color:#000;">OPERATOR ...</div>
<div class="b" style="left:551px;top:89px;width:98px;height:20px;background:#FFFFFF;"></div>
<div class="b" style="left:649px;top:88px;width:1px;height:22px;background:#A0A0A0;"></div>
<div class="b" style="left:550px;top:109px;width:100px;height:1px;background:#A0A0A0;"></div>
<div class="t" style="left:554px;top:92.90px;width:95px;overflow:hidden;font-size:13px;line-height:13px;color:#000;">10385300006</div>
<div class="b" style="left:651px;top:89px;width:98px;height:20px;background:#FFFFFF;"></div>
<div class="b" style="left:749px;top:88px;width:1px;height:22px;background:#A0A0A0;"></div>
<div class="b" style="left:650px;top:109px;width:100px;height:1px;background:#A0A0A0;"></div>
<div class="t" style="left:654px;top:92.90px;width:95px;overflow:hidden;font-size:13px;line-height:13px;color:#000;">PARACLETE...</div>
<div class="b" style="left:751px;top:89px;width:98px;height:20px;background:#FFFFFF;"></div>
<div class="b" style="left:849px;top:88px;width:1px;height:22px;background:#A0A0A0;"></div>
<div class="b" style="left:750px;top:109px;width:100px;height:1px;background:#A0A0A0;"></div>
<div class="t" style="left:754px;top:92.90px;width:95px;overflow:hidden;font-size:13px;line-height:13px;color:#000;">SRT</div>
<div class="b" style="left:851px;top:89px;width:98px;height:20px;background:#FFFFFF;"></div>
<div class="b" style="left:949px;top:88px;width:1px;height:22px;background:#A0A0A0;"></div>
<div class="b" style="left:850px;top:109px;width:100px;height:1px;background:#A0A0A0;"></div>
<div class="t" style="left:854px;top:92.90px;width:95px;overflow:hidden;font-size:13px;line-height:13px;color:#000;">HUNTER - 126</div>
<div class="b" style="left:951px;top:89px;width:98px;height:20px;background:#FFFFFF;"></div>
<div class="b" style="left:1049px;top:88px;width:1px;height:22px;background:#A0A0A0;"></div>
<div class="b" style="left:950px;top:109px;width:100px;height:1px;background:#A0A0A0;"></div>
<div class="t" style="left:954px;top:92.90px;width:95px;overflow:hidden;font-size:13px;line-height:13px;color:#000;">7/28/2025 1:00 PM</div>
<div class="b" style="left:0px;top:110px;width:49px;height:22px;background:#F0F0F0;"></div>
<div class="b" style="left:1px;top:131px;width:48px;height:1px;background:#A0A0A0;"></div>
<div class="b" style="left:49px;top:110px;width:1px;height:22px;background:#A0A0A0;"></div>
<div class="b" style="left:51px;top:111px;width:98px;height:20px;background:#DCE6F1;"></div>
<div class="b" style="left:149px;top:110px;width:1px;height:22px;background:#A0A0A0;"></div>
<div class="b" style="left:50px;top:131px;width:100px;height:1px;background:#A0A0A0;"></div>
<div class="t" style="left:54px;top:114.90px;width:95px;overflow:hidden;font-size:13px;line-height:13px;color:#000;">10385300007</div>
<div class="b" style="left:151px;top:111px;width:98px;height:20px;background:#DCE6F1;"></div>
<div class="b" style="left:249px;top:110px;width:1px;height:22px;background:#A0A0A0;"></div>
<div class="b" style="left:150px;top:131px;width:100px;height:1px;background:#A0A0A0;"></div>
<div class="t" style="left:154px;top:114.90px;width:95px;overflow:hidden;font-size:13px;line-height:13px;color:#000;">3687</div>
<div class="b" style="left:251px;top:111px;width:98px;height:20px;background:#DCE6F1;"></div>
<div class="b" style="left:349px;top:110px;width:1px;height:22px;background:#A0A0A0;"></div>
<div class="b" style="left:250px;top:131px;width:100px;height:1px;background:#A0A0A0;"></div>
<div class="t" style="left:254px;top:114.90px;width:95px;overflow:hidden;font-size:13px;line-height:13px;color:#000;">Ballistic Hel...</div>
<div class="b" style="left:351px;top:111px;width:98px;height:20px;background:#DCE6F1;"></div>
<div class="b" style="left:449px;top:110px;width:1px;height:22px;background:#A0A0A0;"></div>
<div class="b" style="left:350px;top:131px;width:100px;height:1px;background:#A0A0A0;"></div>
<div class="t" style="left:354px;top:114.90px;width:95px;overflow:hidden;font-size:13px;line-height:13px;color:#000;">POINT BLANK</div>
<div class="b" style="left:451px;top:111px;width:98px;height:20px;background:#DCE6F1;"></div>
<div class="b" style="left:549px;top:110px;width:1px;height:22px;background:#A0A0A0;"></div>
<div class="b" style="left:450px;top:131px;width:100px;height:1px;background:#A0A0A0;"></div>
<div class="t" style="left:454px;top:114.90px;width:95px;overflow:hidden;font-size:13px;line-height:13px;color:#000;">OPERATOR ...</div>
<div class="b" style="left:551px;top:111px;width:98px;height:20px;background:#DCE6F1;"></div>
<div class="b" style="left:649px;top:110px;width:1px;height:22px;background:#A0A0A0;"></div>
<div class="b" style="left:550px;top:131px;width:100px;height:1px;background:#A0A0A0;"></div>
<div class="t" style="left:554px;top:114.90px;width:95px;overflow:hidden;font-size:13px;line-height:13px;color:#000;">10385300007</div>
<div class="b" style="left:651px;top:111px;width:98px;height:20px;background:#DCE6F1;"></div>
<div class="b" style="left:749px;top:110px;width:1px;height:22px;background:#A0A0A0;"></div>
<div class="b" style="left:650px;top:131px;width:100px;height:1px;background:#A0A0A0;"></div>
<div class="t" style="left:654px;top:114.90px;width:95px;overflow:hidden;font-size:13px;line-height:13px;color:#000;">PARACLETE...</div>
<div class="b" style="left:751px;top:111px;width:98px;height:20px;background:#DCE6F1;"></div>
<div class="b" style="left:849px;top:110px;width:1px;height:22px;background:#A0A0A0;"></div>
<div class="b" style="left:750px;top:131px;width:100px;height:1px;background:#A0A0A0;"></div>
<div class="t" style="left:754px;top:114.90px;width:95px;overflow:hidden;font-size:13px;line-height:13px;color:#000;">SRT</div>
<div class="b" style="left:851px;top:111px;width:98px;height:20px;background:#DCE6F1;"></div>
<div class="b" style="left:949px;top:110px;width:1px;height:22px;background:#A0A0A0;"></div>
<div class="b" style="left:850px;top:131px;width:100px;height:1px;background:#A0A0A0;"></div>
<div class="t" style="left:854px;top:114.90px;width:95px;overflow:hidden;font-size:13px;line-height:13px;color:#000;">AUGENSTEI...</div>
<div class="b" style="left:951px;top:111px;width:98px;height:20px;background:#DCE6F1;"></div>
<div class="b" style="left:1049px;top:110px;width:1px;height:22px;background:#A0A0A0;"></div>
<div class="b" style="left:950px;top:131px;width:100px;height:1px;background:#A0A0A0;"></div>
<div class="t" style="left:954px;top:114.90px;width:95px;overflow:hidden;font-size:13px;line-height:13px;color:#000;">7/30/2025 1:00 PM</div>
<div class="b" style="left:0px;top:132px;width:49px;height:22px;background:#F0F0F0;"></div>
<div class="b" style="left:1px;top:153px;width:48px;height:1px;background:#A0A0A0;"></div>
<div class="b" style="left:49px;top:132px;width:1px;height:22px;background:#A0A0A0;"></div>
<div class="b" style="left:51px;top:133px;width:98px;height:20px;background:#FFFFFF;"></div>
<div class="b" style="left:149px;top:132px;width:1px;height:22px;background:#A0A0A0;"></div>
<div class="b" style="left:50px;top:153px;width:100px;height:1px;background:#A0A0A0;"></div>
<div class="t" style="left:54px;top:136.90px;width:95px;overflow:hidden;font-size:13px;line-height:13px;color:#000;">10385300003</div>
<div class="b" style="left:151px;top:133px;width:98px;height:20px;background:#FFFFFF;"></div>
<div class="b" style="left:249px;top:132px;width:1px;height:22px;background:#A0A0A0;"></div>
<div class="b" style="left:150px;top:153px;width:100px;height:1px;background:#A0A0A0;"></div>
<div class="t" style="left:154px;top:136.90px;width:95px;overflow:hidden;font-size:13px;line-height:13px;color:#000;">3686</div>
<div class="b" style="left:251px;top:133px;width:98px;height:20px;background:#FFFFFF;"></div>
<div class="b" style="left:349px;top:132px;width:1px;height:22px;background:#A0A0A0;"></div>
<div class="b" style="left:250px;top:153px;width:100px;height:1px;background:#A0A0A0;"></div>
<div class="t" style="left:254px;top:136.90px;width:95px;overflow:hidden;font-size:13px;line-height:13px;color:#000;">Ballistic Hel...</div>
<div class="b" style="left:351px;top:133px;width:98px;height:20px;background:#FFFFFF;"></div>
<div class="b" style="left:449px;top:132px;width:1px;height:22px;background:#A0A0A0;"></div>
<div class="b" style="left:350px;top:153px;width:100px;height:1px;background:#A0A0A0;"></div>
<div class="t" style="left:354px;top:136.90px;width:95px;overflow:hidden;font-size:13px;line-height:13px;color:#000;">POINT BLANK</div>
<div class="b" style="left:451px;top:133px;width:98px;height:20px;background:#FFFFFF;"></div>
<div class="b" style="left:549px;top:132px;width:1px;height:22px;background:#A0A0A0;"></div>
<div class="b" style="left:450px;top:153px;width:100px;height:1px;background:#A0A0A0;"></div>
<div class="t" style="left:454px;top:136.90px;width:95px;overflow:hidden;font-size:13px;line-height:13px;color:#000;">OPERATOR ...</div>
<div class="b" style="left:551px;top:133px;width:98px;height:20px;background:#FFFFFF;"></div>
<div class="b" style="left:649px;top:132px;width:1px;height:22px;background:#A0A0A0;"></div>
<div class="b" style="left:550px;top:153px;width:100px;height:1px;background:#A0A0A0;"></div>
<div class="t" style="left:554px;top:136.90px;width:95px;overflow:hidden;font-size:13px;line-height:13px;color:#000;">10385300003</div>
<div class="b" style="left:651px;top:133px;width:98px;height:20px;background:#FFFFFF;"></div>
<div class="b" style="left:749px;top:132px;width:1px;height:22px;background:#A0A0A0;"></div>
<div class="b" style="left:650px;top:153px;width:100px;height:1px;background:#A0A0A0;"></div>
<div class="t" style="left:654px;top:136.90px;width:95px;overflow:hidden;font-size:13px;line-height:13px;color:#000;">PARACLETE...</div>
<div class="b" style="left:751px;top:133px;width:98px;height:20px;background:#FFFFFF;"></div>
<div class="b" style="left:849px;top:132px;width:1px;height:22px;background:#A0A0A0;"></div>
<div class="b" style="left:750px;top:153px;width:100px;height:1px;background:#A0A0A0;"></div>
<div class="t" style="left:754px;top:136.90px;width:95px;overflow:hidden;font-size:13px;line-height:13px;color:#000;">SRT</div>
<div class="b" style="left:851px;top:133px;width:98px;height:20px;background:#FFFFFF;"></div>
<div class="b" style="left:949px;top:132px;width:1px;height:22px;background:#A0A0A0;"></div>
<div class="b" style="left:850px;top:153px;width:100px;height:1px;background:#A0A0A0;"></div>
<div class="t" style="left:854px;top:136.90px;width:95px;overflow:hidden;font-size:13px;line-height:13px;color:#000;">MCKEE - 910</div>
<div class="b" style="left:951px;top:133px;width:98px;height:20px;background:#FFFFFF;"></div>
<div class="b" style="left:1049px;top:132px;width:1px;height:22px;background:#A0A0A0;"></div>
<div class="b" style="left:950px;top:153px;width:100px;height:1px;background:#A0A0A0;"></div>
<div class="t" style="left:954px;top:136.90px;width:95px;overflow:hidden;font-size:13px;line-height:13px;color:#000;">7/28/2025 1:00 PM</div>
<div class="b" style="left:0px;top:154px;width:49px;height:22px;background:#F0F0F0;"></div>
<div class="b" style="left:1px;top:175px;width:48px;height:1px;background:#A0A0A0;"></div>
<div class="b" style="left:49px;top:154px;width:1px;height:22px;background:#A0A0A0;"></div>
<div class="b" style="left:51px;top:155px;width:98px;height:20px;background:#DCE6F1;"></div>
<div class="b" style="left:149px;top:154px;width:1px;height:22px;background:#A0A0A0;"></div>
<div class="b" style="left:50px;top:175px;width:100px;height:1px;background:#A0A0A0;"></div>
<div class="t" style="left:54px;top:158.90px;width:95px;overflow:hidden;font-size:13px;line-height:13px;color:#000;">10385300002</div>
<div class="b" style="left:151px;top:155px;width:98px;height:20px;background:#DCE6F1;"></div>
<div class="b" style="left:249px;top:154px;width:1px;height:22px;background:#A0A0A0;"></div>
<div class="b" style="left:150px;top:175px;width:100px;height:1px;background:#A0A0A0;"></div>
<div class="t" style="left:154px;top:158.90px;width:95px;overflow:hidden;font-size:13px;line-height:13px;color:#000;">3685</div>
<div class="b" style="left:251px;top:155px;width:98px;height:20px;background:#DCE6F1;"></div>
<div class="b" style="left:349px;top:154px;width:1px;height:22px;background:#A0A0A0;"></div>
<div class="b" style="left:250px;top:175px;width:100px;height:1px;background:#A0A0A0;"></div>
<div class="t" style="left:254px;top:158.90px;width:95px;overflow:hidden;font-size:13px;line-height:13px;color:#000;">Ballistic Hel...</div>
<div class="b" style="left:351px;top:155px;width:98px;height:20px;background:#DCE6F1;"></div>
<div class="b" style="left:449px;top:154px;width:1px;height:22px;background:#A0A0A0;"></div>
<div class="b" style="left:350px;top:175px;width:100px;height:1px;background:#A0A0A0;"></div>
<div class="t" style="left:354px;top:158.90px;width:95px;overflow:hidden;font-size:13px;line-height:13px;color:#000;">POINT BLANK</div>
<div class="b" style="left:451px;top:155px;width:98px;height:20px;background:#DCE6F1;"></div>
<div class="b" style="left:549px;top:154px;width:1px;height:22px;background:#A0A0A0;"></div>
<div class="b" style="left:450px;top:175px;width:100px;height:1px;background:#A0A0A0;"></div>
<div class="t" style="left:454px;top:158.90px;width:95px;overflow:hidden;font-size:13px;line-height:13px;color:#000;">OPERATOR ...</div>
<div class="b" style="left:551px;top:155px;width:98px;height:20px;background:#DCE6F1;"></div>
<div class="b" style="left:649px;top:154px;width:1px;height:22px;background:#A0A0A0;"></div>
<div class="b" style="left:550px;top:175px;width:100px;height:1px;background:#A0A0A0;"></div>
<div class="t" style="left:554px;top:158.90px;width:95px;overflow:hidden;font-size:13px;line-height:13px;color:#000;">10385300002</div>
<div class="b" style="left:651px;top:155px;width:98px;height:20px;background:#DCE6F1;"></div>
<div class="b" style="left:749px;top:154px;width:1px;height:22px;background:#A0A0A0;"></div>
<div class="b" style="left:650px;top:175px;width:100px;height:1px;background:#A0A0A0;"></div>
<div class="t" style="left:654px;top:158.90px;width:95px;overflow:hidden;font-size:13px;line-height:13px;color:#000;">PARACLETE...</div>
<div class="b" style="left:751px;top:155px;width:98px;height:20px;background:#DCE6F1;"></div>
<div class="b" style="left:849px;top:154px;width:1px;height:22px;background:#A0A0A0;"></div>
<div class="b" style="left:750px;top:175px;width:100px;height:1px;background:#A0A0A0;"></div>
<div class="t" style="left:754px;top:158.90px;width:95px;overflow:hidden;font-size:13px;line-height:13px;color:#000;">SRT</div>
<div class="b" style="left:851px;top:155px;width:98px;height:20px;background:#DCE6F1;"></div>
<div class="b" style="left:949px;top:154px;width:1px;height:22px;background:#A0A0A0;"></div>
<div class="b" style="left:850px;top:175px;width:100px;height:1px;background:#A0A0A0;"></div>
<div class="t" style="left:854px;top:158.90px;width:95px;overflow:hidden;font-size:13px;line-height:13px;color:#000;">HUFFMAN - ...</div>
<div class="b" style="left:951px;top:155px;width:98px;height:20px;background:#DCE6F1;"></div>
<div class="b" style="left:1049px;top:154px;width:1px;height:22px;background:#A0A0A0;"></div>
<div class="b" style="left:950px;top:175px;width:100px;height:1px;background:#A0A0A0;"></div>
<div class="t" style="left:954px;top:158.90px;width:95px;overflow:hidden;font-size:13px;line-height:13px;color:#000;">7/30/2025 1:00 PM</div>
<div class="b" style="left:0px;top:176px;width:49px;height:22px;background:#F0F0F0;"></div>
<div class="b" style="left:1px;top:197px;width:48px;height:1px;background:#A0A0A0;"></div>
<div class="b" style="left:49px;top:176px;width:1px;height:22px;background:#A0A0A0;"></div>
<div class="b" style="left:51px;top:177px;width:98px;height:20px;background:#FFFFFF;"></div>
<div class="b" style="left:149px;top:176px;width:1px;height:22px;background:#A0A0A0;"></div>
<div class="b" style="left:50px;top:197px;width:100px;height:1px;background:#A0A0A0;"></div>
<div class="t" style="left:54px;top:180.90px;width:95px;overflow:hidden;font-size:13px;line-height:13px;color:#000;">10385300004</div>
<div class="b" style="left:151px;top:177px;width:98px;height:20px;background:#FFFFFF;"></div>
<div class="b" style="left:249px;top:176px;width:1px;height:22px;background:#A0A0A0;"></div>
<div class="b" style="left:150px;top:197px;width:100px;height:1px;background:#A0A0A0;"></div>
<div class="t" style="left:154px;top:180.90px;width:95px;overflow:hidden;font-size:13px;line-height:13px;color:#000;">3684</div>
<div class="b" style="left:251px;top:177px;width:98px;height:20px;background:#FFFFFF;"></div>
<div class="b" style="left:349px;top:176px;width:1px;height:22px;background:#A0A0A0;"></div>
<div class="b" style="left:250px;top:197px;width:100px;height:1px;background:#A0A0A0;"></div>
<div class="t" style="left:254px;top:180.90px;width:95px;overflow:hidden;font-size:13px;line-height:13px;color:#000;">Ballistic Hel...</div>
<div class="b" style="left:351px;top:177px;width:98px;height:20px;background:#FFFFFF;"></div>
<div class="b" style="left:449px;top:176px;width:1px;height:22px;background:#A0A0A0;"></div>
<div class="b" style="left:350px;top:197px;width:100px;height:1px;background:#A0A0A0;"></div>
<div class="t" style="left:354px;top:180.90px;width:95px;overflow:hidden;font-size:13px;line-height:13px;color:#000;">POINT BLANK</div>
<div class="b" style="left:451px;top:177px;width:98px;height:20px;background:#FFFFFF;"></div>
<div class="b" style="left:549px;top:176px;width:1px;height:22px;background:#A0A0A0;"></div>
<div class="b" style="left:450px;top:197px;width:100px;height:1px;background:#A0A0A0;"></div>
<div class="t" style="left:454px;top:180.90px;width:95px;overflow:hidden;font-size:13px;line-height:13px;color:#000;">OPERATOR ...</div>
<div class="b" style="left:551px;top:177px;width:98px;height:20px;background:#FFFFFF;"></div>
<div class="b" style="left:649px;top:176px;width:1px;height:22px;background:#A0A0A0;"></div>
<div class="b" style="left:550px;top:197px;width:100px;height:1px;background:#A0A0A0;"></div>
<div class="t" style="left:554px;top:180.90px;width:95px;overflow:hidden;font-size:13px;line-height:13px;color:#000;">10385300004</div>
<div class="b" style="left:651px;top:177px;width:98px;height:20px;background:#FFFFFF;"></div>
<div class="b" style="left:749px;top:176px;width:1px;height:22px;background:#A0A0A0;"></div>
<div class="b" style="left:650px;top:197px;width:100px;height:1px;background:#A0A0A0;"></div>
<div class="t" style="left:654px;top:180.90px;width:95px;overflow:hidden;font-size:13px;line-height:13px;color:#000;">PARACLETE...</div>
<div class="b" style="left:751px;top:177px;width:98px;height:20px;background:#FFFFFF;"></div>
<div class="b" style="left:849px;top:176px;width:1px;height:22px;background:#A0A0A0;"></div>
<div class="b" style="left:750px;top:197px;width:100px;height:1px;background:#A0A0A0;"></div>
<div class="t" style="left:754px;top:180.90px;width:95px;overflow:hidden;font-size:13px;line-height:13px;color:#000;">SRT</div>
<div class="b" style="left:851px;top:177px;width:98px;height:20px;background:#FFFFFF;"></div>
<div class="b" style="left:949px;top:176px;width:1px;height:22px;background:#A0A0A0;"></div>
<div class="b" style="left:850px;top:197px;width:100px;height:1px;background:#A0A0A0;"></div>
<div class="t" style="left:854px;top:180.90px;width:95px;overflow:hidden;font-size:13px;line-height:13px;color:#000;">YOUNG - 716</div>
<div class="b" style="left:951px;top:177px;width:98px;height:20px;background:#FFFFFF;"></div>
<div class="b" style="left:1049px;top:176px;width:1px;height:22px;background:#A0A0A0;"></div>
<div class="b" style="left:950px;top:197px;width:100px;height:1px;background:#A0A0A0;"></div>
<div class="t" style="left:954px;top:180.90px;width:95px;overflow:hidden;font-size:13px;line-height:13px;color:#000;">7/28/2025 1:00 PM</div>
<div class="b" style="left:0px;top:198px;width:49px;height:22px;background:#F0F0F0;"></div>
<div class="b" style="left:1px;top:219px;width:48px;height:1px;background:#A0A0A0;"></div>
<div class="b" style="left:49px;top:198px;width:1px;height:22px;background:#A0A0A0;"></div>
<div class="b" style="left:51px;top:199px;width:98px;height:20px;background:#DCE6F1;"></div>
<div class="b" style="left:149px;top:198px;width:1px;height:22px;background:#A0A0A0;"></div>
<div class="b" style="left:50px;top:219px;width:100px;height:1px;background:#A0A0A0;"></div>
<div class="t" style="left:54px;top:202.90px;width:95px;overflow:hidden;font-size:13px;line-height:13px;color:#000;">10385300005</div>
<div class="b" style="left:151px;top:199px;width:98px;height:20px;background:#DCE6F1;"></div>
<div class="b" style="left:249px;top:198px;width:1px;height:22px;background:#A0A0A0;"></div>
<div class="b" style="left:150px;top:219px;width:100px;height:1px;background:#A0A0A0;"></div>
<div class="t" style="left:154px;top:202.90px;width:95px;overflow:hidden;font-size:13px;line-height:13px;color:#000;">3683</div>
<div class="b" style="left:251px;top:199px;width:98px;height:20px;background:#DCE6F1;"></div>
<div class="b" style="left:349px;top:198px;width:1px;height:22px;background:#A0A0A0;"></div>
<div class="b" style="left:250px;top:219px;width:100px;height:1px;background:#A0A0A0;"></div>
<div class="t" style="left:254px;top:202.90px;width:95px;overflow:hidden;font-size:13px;line-height:13px;color:#000;">Ballistic Hel...</div>
<div class="b" style="left:351px;top:199px;width:98px;height:20px;background:#DCE6F1;"></div>
<div class="b" style="left:449px;top:198px;width:1px;height:22px;background:#A0A0A0;"></div>
<div class="b" style="left:350px;top:219px;width:100px;height:1px;background:#A0A0A0;"></div>
<div class="t" style="left:354px;top:202.90px;width:95px;overflow:hidden;font-size:13px;line-height:13px;color:#000;">POINT BLANK</div>
<div class="b" style="left:451px;top:199px;width:98px;height:20px;background:#DCE6F1;"></div>
<div class="b" style="left:549px;top:198px;width:1px;height:22px;background:#A0A0A0;"></div>
<div class="b" style="left:450px;top:219px;width:100px;height:1px;background:#A0A0A0;"></div>
<div class="t" style="left:454px;top:202.90px;width:95px;overflow:hidden;font-size:13px;line-height:13px;color:#000;">OPERATOR ...</div>
<div class="b" style="left:551px;top:199px;width:98px;height:20px;background:#DCE6F1;"></div>
<div class="b" style="left:649px;top:198px;width:1px;height:22px;background:#A0A0A0;"></div>
<div class="b" style="left:550px;top:219px;width:100px;height:1px;background:#A0A0A0;"></div>
<div class="t" style="left:554px;top:202.90px;width:95px;overflow:hidden;font-size:13px;line-height:13px;color:#000;">10385300005</div>
<div class="b" style="left:651px;top:199px;width:98px;height:20px;background:#DCE6F1;"></div>
<div class="b" style="left:749px;top:198px;width:1px;height:22px;background:#A0A0A0;"></div>
<div class="b" style="left:650px;top:219px;width:100px;height:1px;background:#A0A0A0;"></div>
<div class="t" style="left:654px;top:202.90px;width:95px;overflow:hidden;font-size:13px;line-height:13px;color:#000;">PARACLETE...</div>
<div class="b" style="left:751px;top:199px;width:98px;height:20px;background:#DCE6F1;"></div>
<div class="b" style="left:849px;top:198px;width:1px;height:22px;background:#A0A0A0;"></div>
<div class="b" style="left:750px;top:219px;width:100px;height:1px;background:#A0A0A0;"></div>
<div class="t" style="left:754px;top:202.90px;width:95px;overflow:hidden;font-size:13px;line-height:13px;color:#000;">SRT</div>
<div class="b" style="left:851px;top:199px;width:98px;height:20px;background:#DCE6F1;"></div>
<div class="b" style="left:949px;top:198px;width:1px;height:22px;background:#A0A0A0;"></div>
<div class="b" style="left:850px;top:219px;width:100px;height:1px;background:#A0A0A0;"></div>
<div class="t" style="left:854px;top:202.90px;width:95px;overflow:hidden;font-size:13px;line-height:13px;color:#000;">PETERS - 416</div>
<div class="b" style="left:951px;top:199px;width:98px;height:20px;background:#DCE6F1;"></div>
<div class="b" style="left:1049px;top:198px;width:1px;height:22px;background:#A0A0A0;"></div>
<div class="b" style="left:950px;top:219px;width:100px;height:1px;background:#A0A0A0;"></div>
<div class="t" style="left:954px;top:202.90px;width:95px;overflow:hidden;font-size:13px;line-height:13px;color:#000;">7/28/2025 1:00 PM</div>
<div class="b" style="left:0px;top:220px;width:49px;height:22px;background:#F0F0F0;"></div>
<div class="b" style="left:1px;top:241px;width:48px;height:1px;background:#A0A0A0;"></div>
<div class="b" style="left:49px;top:220px;width:1px;height:22px;background:#A0A0A0;"></div>
<div class="b" style="left:51px;top:221px;width:98px;height:20px;background:#FFFFFF;"></div>
<div class="b" style="left:149px;top:220px;width:1px;height:22px;background:#A0A0A0;"></div>
<div class="b" style="left:50px;top:241px;width:100px;height:1px;background:#A0A0A0;"></div>
<div class="t" style="left:54px;top:224.90px;width:95px;overflow:hidden;font-size:13px;line-height:13px;color:#000;">107640</div>
<div class="b" style="left:151px;top:221px;width:98px;height:20px;background:#FFFFFF;"></div>
<div class="b" style="left:249px;top:220px;width:1px;height:22px;background:#A0A0A0;"></div>
<div class="b" style="left:150px;top:241px;width:100px;height:1px;background:#A0A0A0;"></div>
<div class="t" style="left:154px;top:224.90px;width:95px;overflow:hidden;font-size:13px;line-height:13px;color:#000;">3682</div>
<div class="b" style="left:251px;top:221px;width:98px;height:20px;background:#FFFFFF;"></div>
<div class="b" style="left:349px;top:220px;width:1px;height:22px;background:#A0A0A0;"></div>
<div class="b" style="left:250px;top:241px;width:100px;height:1px;background:#A0A0A0;"></div>
<div class="t" style="left:254px;top:224.90px;width:95px;overflow:hidden;font-size:13px;line-height:13px;color:#000;">Ballistic Vests</div>
<div class="b" style="left:351px;top:221px;width:98px;height:20px;background:#FFFFFF;"></div>
<div class="b" style="left:449px;top:220px;width:1px;height:22px;background:#A0A0A0;"></div>
<div class="b" style="left:350px;top:241px;width:100px;height:1px;background:#A0A0A0;"></div>
<div class="t" style="left:354px;top:224.90px;width:95px;overflow:hidden;font-size:13px;line-height:13px;color:#000;">POINT BLANK</div>
<div class="b" style="left:451px;top:221px;width:98px;height:20px;background:#FFFFFF;"></div>
<div class="b" style="left:549px;top:220px;width:1px;height:22px;background:#A0A0A0;"></div>
<div class="b" style="left:450px;top:241px;width:100px;height:1px;background:#A0A0A0;"></div>
<div class="t" style="left:454px;top:224.90px;width:95px;overflow:hidden;font-size:13px;line-height:13px;color:#000;">AXBIIIA</div>
<div class="b" style="left:551px;top:221px;width:98px;height:20px;background:#FFFFFF;"></div>
<div class="b" style="left:649px;top:220px;width:1px;height:22px;background:#A0A0A0;"></div>
<div class="b" style="left:550px;top:241px;width:100px;height:1px;background:#A0A0A0;"></div>
<div class="t" style="left:554px;top:224.90px;width:95px;overflow:hidden;font-size:13px;line-height:13px;color:#000;">250000107640</div>
<div class="b" style="left:651px;top:221px;width:98px;height:20px;background:#FFFFFF;"></div>
<div class="b" style="left:749px;top:220px;width:1px;height:22px;background:#A0A0A0;"></div>
<div class="b" style="left:650px;top:241px;width:100px;height:1px;background:#A0A0A0;"></div>
<div class="t" style="left:654px;top:224.90px;width:95px;overflow:hidden;font-size:13px;line-height:13px;color:#000;">PARACLETE...</div>
<div class="b" style="left:751px;top:221px;width:98px;height:20px;background:#FFFFFF;"></div>
<div class="b" style="left:849px;top:220px;width:1px;height:22px;background:#A0A0A0;"></div>
<div class="b" style="left:750px;top:241px;width:100px;height:1px;background:#A0A0A0;"></div>
<div class="t" style="left:754px;top:224.90px;width:95px;overflow:hidden;font-size:13px;line-height:13px;color:#000;">SRT</div>
<div class="b" style="left:851px;top:221px;width:98px;height:20px;background:#FFFFFF;"></div>
<div class="b" style="left:949px;top:220px;width:1px;height:22px;background:#A0A0A0;"></div>
<div class="b" style="left:850px;top:241px;width:100px;height:1px;background:#A0A0A0;"></div>
<div class="t" style="left:854px;top:224.90px;width:95px;overflow:hidden;font-size:13px;line-height:13px;color:#000;">PETERS - 416</div>
<div class="b" style="left:951px;top:221px;width:98px;height:20px;background:#FFFFFF;"></div>
<div class="b" style="left:1049px;top:220px;width:1px;height:22px;background:#A0A0A0;"></div>
<div class="b" style="left:950px;top:241px;width:100px;height:1px;background:#A0A0A0;"></div>
<div class="t" style="left:954px;top:224.90px;width:95px;overflow:hidden;font-size:13px;line-height:13px;color:#000;">7/28/2025 9:00 AM</div>
<div class="b" style="left:0px;top:242px;width:49px;height:22px;background:#F0F0F0;"></div>
<div class="b" style="left:1px;top:263px;width:48px;height:1px;background:#A0A0A0;"></div>
<div class="b" style="left:49px;top:242px;width:1px;height:22px;background:#A0A0A0;"></div>
<div class="b" style="left:51px;top:243px;width:98px;height:20px;background:#DCE6F1;"></div>
<div class="b" style="left:149px;top:242px;width:1px;height:22px;background:#A0A0A0;"></div>
<div class="b" style="left:50px;top:263px;width:100px;height:1px;background:#A0A0A0;"></div>
<div class="t" style="left:54px;top:246.90px;width:95px;overflow:hidden;font-size:13px;line-height:13px;color:#000;">107641</div>
<div class="b" style="left:151px;top:243px;width:98px;height:20px;background:#DCE6F1;"></div>
<div class="b" style="left:249px;top:242px;width:1px;height:22px;background:#A0A0A0;"></div>
<div class="b" style="left:150px;top:263px;width:100px;height:1px;background:#A0A0A0;"></div>
<div class="t" style="left:154px;top:246.90px;width:95px;overflow:hidden;font-size:13px;line-height:13px;color:#000;">3681</div>
<div class="b" style="left:251px;top:243px;width:98px;height:20px;background:#DCE6F1;"></div>
<div class="b" style="left:349px;top:242px;width:1px;height:22px;background:#A0A0A0;"></div>
<div class="b" style="left:250px;top:263px;width:100px;height:1px;background:#A0A0A0;"></div>
<div class="t" style="left:254px;top:246.90px;width:95px;overflow:hidden;font-size:13px;line-height:13px;color:#000;">Ballistic Vests</div>
<div class="b" style="left:351px;top:243px;width:98px;height:20px;background:#DCE6F1;"></div>
<div class="b" style="left:449px;top:242px;width:1px;height:22px;background:#A0A0A0;"></div>
<div class="b" style="left:350px;top:263px;width:100px;height:1px;background:#A0A0A0;"></div>
<div class="t" style="left:354px;top:246.90px;width:95px;overflow:hidden;font-size:13px;line-height:13px;color:#000;">POINT BLANK</div>
<div class="b" style="left:451px;top:243px;width:98px;height:20px;background:#DCE6F1;"></div>
<div class="b" style="left:549px;top:242px;width:1px;height:22px;background:#A0A0A0;"></div>
<div class="b" style="left:450px;top:263px;width:100px;height:1px;background:#A0A0A0;"></div>
<div class="t" style="left:454px;top:246.90px;width:95px;overflow:hidden;font-size:13px;line-height:13px;color:#000;">AXBIIIA</div>
<div class="b" style="left:551px;top:243px;width:98px;height:20px;background:#DCE6F1;"></div>
<div class="b" style="left:649px;top:242px;width:1px;height:22px;background:#A0A0A0;"></div>
<div class="b" style="left:550px;top:263px;width:100px;height:1px;background:#A0A0A0;"></div>
<div class="t" style="left:554px;top:246.90px;width:95px;overflow:hidden;font-size:13px;line-height:13px;color:#000;">250000107641</div>
<div class="b" style="left:651px;top:243px;width:98px;height:20px;background:#DCE6F1;"></div>
<div class="b" style="left:749px;top:242px;width:1px;height:22px;background:#A0A0A0;"></div>
<div class="b" style="left:650px;top:263px;width:100px;height:1px;background:#A0A0A0;"></div>
<div class="t" style="left:654px;top:246.90px;width:95px;overflow:hidden;font-size:13px;line-height:13px;color:#000;">PARACLETE...</div>
<div class="b" style="left:751px;top:243px;width:98px;height:20px;background:#DCE6F1;"></div>
<div class="b" style="left:849px;top:242px;width:1px;height:22px;background:#A0A0A0;"></div>
<div class="b" style="left:750px;top:263px;width:100px;height:1px;background:#A0A0A0;"></div>
<div class="t" style="left:754px;top:246.90px;width:95px;overflow:hidden;font-size:13px;line-height:13px;color:#000;">SRT</div>
<div class="b" style="left:851px;top:243px;width:98px;height:20px;background:#DCE6F1;"></div>
<div class="b" style="left:949px;top:242px;width:1px;height:22px;background:#A0A0A0;"></div>
<div class="b" style="left:850px;top:263px;width:100px;height:1px;background:#A0A0A0;"></div>
<div class="t" style="left:854px;top:246.90px;width:95px;overflow:hidden;font-size:13px;line-height:13px;color:#000;">INVENT BRO...</div>
<div class="b" style="left:951px;top:243px;width:98px;height:20px;background:#DCE6F1;"></div>
<div class="b" style="left:1049px;top:242px;width:1px;height:22px;background:#A0A0A0;"></div>
<div class="b" style="left:950px;top:263px;width:100px;height:1px;background:#A0A0A0;"></div>
<div class="t" style="left:954px;top:246.90px;width:95px;overflow:hidden;font-size:13px;line-height:13px;color:#000;">8/19/2025 9:00 AM</div>
</div>
<div class="b" style="left:1289px;top:475px;width:16px;height:307px;background:#F0F0F0;"></div>
<div class="b" style="left:1297px;top:491px;width:2px;height:17px;background:#606060;border-radius:1px;"></div>
<div class="b" style="left:269px;top:782px;width:1036px;height:16px;background:#F0F0F0;"></div>
<div class="b" style="left:285px;top:790px;width:368px;height:2px;background:#808080;border-radius:1px;"></div>
<div class="t" style="left:1074px;top:804.02px;font-size:14.15px;line-height:14.15px;color:#000;">Double click on item to edit or delete.</div>
</body></html>
